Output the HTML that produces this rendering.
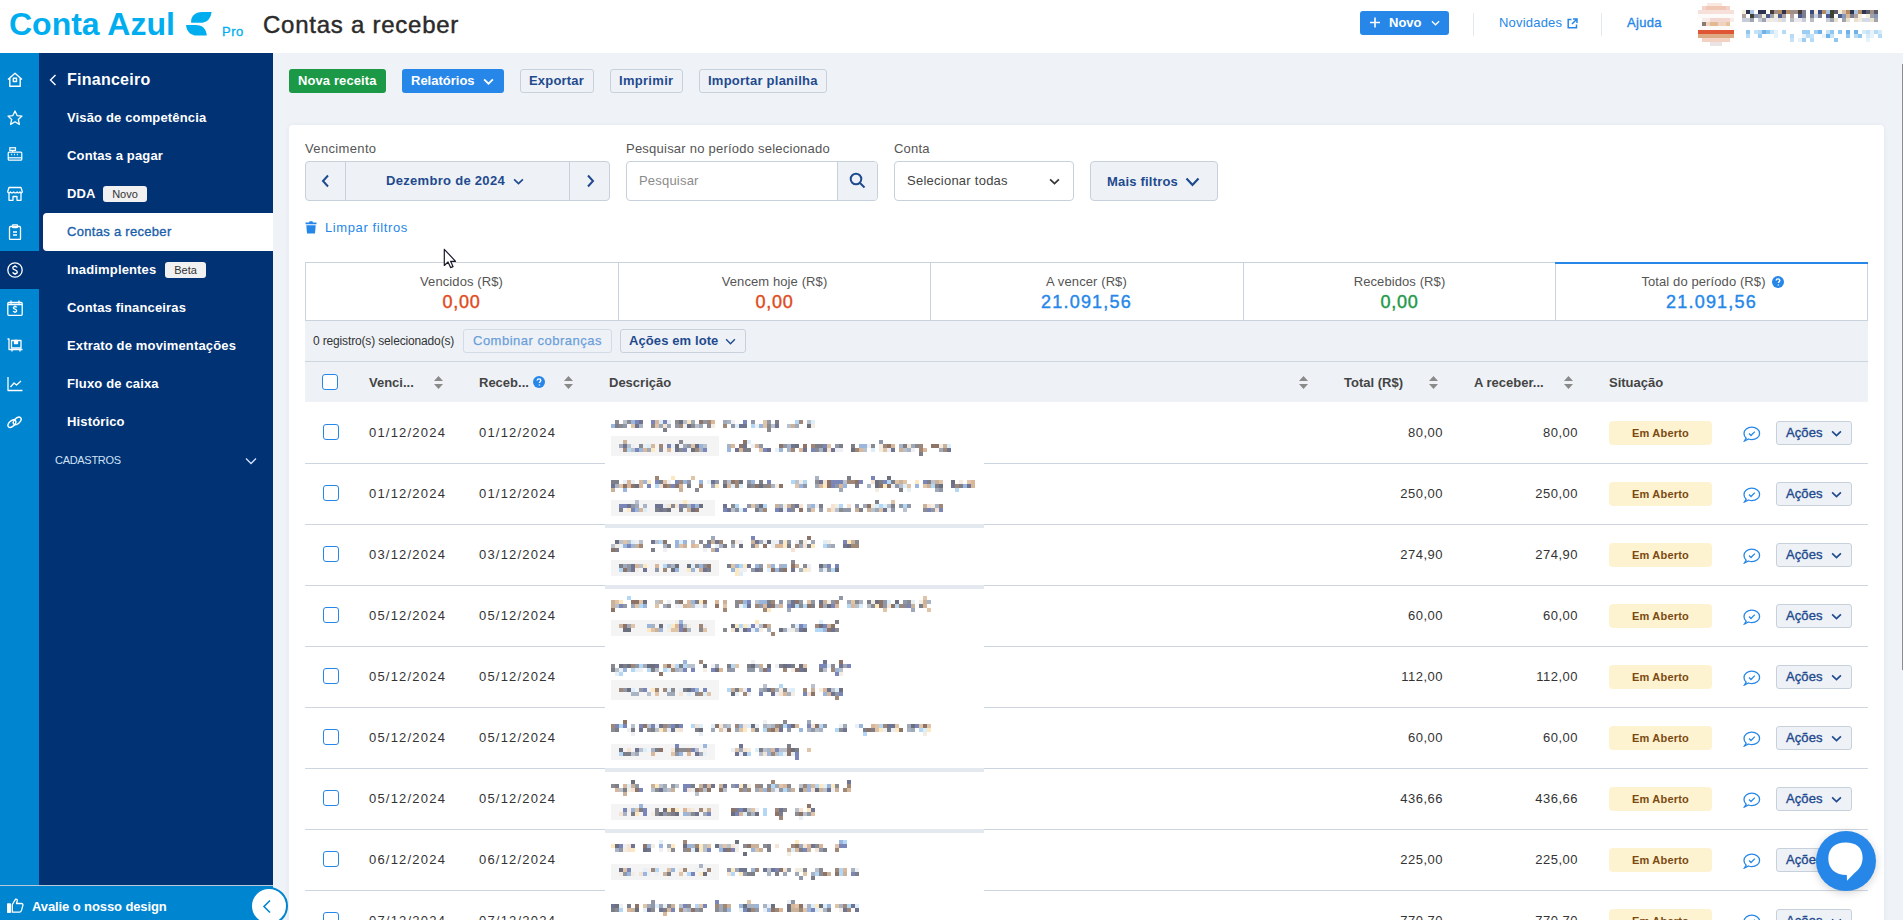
<!DOCTYPE html>
<html><head><meta charset="utf-8">
<style>
*{box-sizing:border-box;margin:0;padding:0}
html,body{width:1903px;height:920px;overflow:hidden;background:#eff3f8;font-family:"Liberation Sans",sans-serif;color:#333}
.a{position:absolute;white-space:nowrap}
.t13{font-size:13px;line-height:13px}
.b{font-weight:bold}
svg{display:block}
#hdr{position:absolute;left:0;top:0;width:1903px;height:53px;background:#fff}
#rail{position:absolute;left:0;top:53px;width:39px;height:867px;background:#0085d0}
#side{position:absolute;left:39px;top:53px;width:234px;height:867px;background:#003274}
.si{position:absolute;left:28px;font-size:13px;line-height:13px;font-weight:bold;color:#fff;letter-spacing:0.15px}
.ri{position:absolute;left:7px;width:16px;height:16px}
.btn{position:absolute;border-radius:3px;height:24px}
.wbtn{position:absolute;border:1px solid #c7d1dc;border-radius:3px;height:24px;background:#eef2f7}
</style></head>
<body>
<!-- HEADER -->
<div id="hdr">
  <div class="a b" style="left:9px;top:8px;font-size:32px;line-height:32px;color:#00aeef;letter-spacing:0px">Conta Azul</div>
  <svg class="a" style="left:186px;top:8px" width="27" height="30" viewBox="0 0 27 30"><path d="M5.1 14.8 C4.6 8 9 3.9 16.2 3.9 L25.6 3.9 C24.8 10.5 21 14.8 14.3 14.8 Z" fill="#00aeef"/><path d="M0 17 L9.9 17 C16.5 17 20.3 21 20.8 27.6 L11 27.6 C4.6 27.6 0.6 23.5 0 17 Z" fill="#00aeef"/></svg>
  <div class="a t13" style="left:222px;top:24.5px;color:#00aeef;letter-spacing:0.5px;-webkit-text-stroke:0.3px #00aeef">Pro</div>
  <div class="a" style="left:263px;top:12.5px;font-size:24px;line-height:24px;color:#2b2b2b;letter-spacing:0.75px;-webkit-text-stroke:0.45px #2b2b2b">Contas a receber</div>
</div>
<!-- RAIL -->
<div id="rail">
  <svg class="ri" style="top:19px" viewBox="0 0 16 16" fill="none" stroke="#fff" stroke-width="1.4" stroke-linejoin="round"><path d="M1 7.5 L8 1.2 L15 7.5 M2.8 6 V14.3 H13.2 V6"/><rect x="6.3" y="6.3" width="3.2" height="3.2"/></svg>
  <svg class="ri" style="top:57px" viewBox="0 0 16 16" fill="none" stroke="#fff" stroke-width="1.3" stroke-linejoin="round"><path d="M8 1 L10.1 5.6 L15 6.1 L11.3 9.4 L12.4 14.4 L8 11.8 L3.6 14.4 L4.7 9.4 L1 6.1 L5.9 5.6 Z"/></svg>
  <svg class="ri" style="top:94px" viewBox="0 0 16 17" fill="none" stroke="#fff" stroke-width="1.3"><rect x="2.5" y="0.8" width="6" height="2.8"/><path d="M5.5 3.6 V5.5"/><rect x="0.8" y="5.5" width="14.4" height="8.5" rx="1"/><path d="M0.8 11.5 H15.2"/><path d="M4 8 h1 M7 8 h1 M10 8 h1" stroke-width="1.6"/></svg>
  <svg class="ri" style="top:133px" viewBox="0 0 16 16" fill="none" stroke="#fff" stroke-width="1.3" stroke-linejoin="round"><path d="M2 1.5 H14 L15.3 5.8 C15.3 7.3 13.5 7.3 13 5.8 C12.3 7.3 10.5 7.3 10.2 5.8 C9.6 7.3 7.2 7.3 6.8 5.8 C6.1 7.3 4 7.3 3.4 5.8 C3 7.3 0.7 7.3 0.7 5.8 Z"/><path d="M2 7 V14.3 H6 V10.5 H10 V14.3 H14 V7"/></svg>
  <svg class="ri" style="top:171px" viewBox="0 0 16 16" fill="none" stroke="#fff" stroke-width="1.3" stroke-linejoin="round"><rect x="2.5" y="2.5" width="11" height="13" rx="1"/><rect x="5.5" y="0.8" width="5" height="2.8" rx="0.5"/><path d="M6 8 H10 M6 11 H10"/></svg>
  <div style="position:absolute;left:0;top:198px;width:39px;height:38px;background:#003274"></div>
  <svg class="ri" style="top:209px" viewBox="0 0 16 16" fill="none" stroke="#fff" stroke-width="1.3"><circle cx="8" cy="8" r="7.2"/><path d="M10.2 5.6 C9.8 4.6 8.9 4.3 8 4.3 C6.8 4.3 5.8 5 5.8 6 C5.8 8.3 10.3 7.5 10.3 10 C10.3 11 9.3 11.7 8 11.7 C6.9 11.7 6 11.2 5.7 10.3 M8 3 V4.3 M8 11.7 V13"/></svg>
  <svg class="ri" style="top:247px" viewBox="0 0 16 16" fill="none" stroke="#fff" stroke-width="1.3"><rect x="0.8" y="2.5" width="14.4" height="12.8" rx="1"/><path d="M4 0.5 V3.5 M12 0.5 V3.5 M0.8 4.5 H15.2"/><path d="M9.8 7.4 C9.5 6.8 8.8 6.6 8 6.6 C7.1 6.6 6.4 7.1 6.4 7.8 C6.4 9.5 9.7 8.9 9.7 10.7 C9.7 11.4 9 11.9 8 11.9 C7.2 11.9 6.5 11.6 6.2 10.9 M8 5.6 V6.6 M8 11.9 V13"/></svg>
  <svg class="ri" style="top:285px" viewBox="0 0 16 16" fill="none" stroke="#fff" stroke-width="1.3" stroke-linejoin="round"><path d="M0.5 1 H2 V11.5 H15.5"/><rect x="4.5" y="2.5" width="9.5" height="7.5"/><rect x="7.5" y="2.5" width="3" height="3" fill="#fff"/><path d="M5 11.5 V13.5 M13 11.5 V13.5"/></svg>
  <svg class="ri" style="top:323px" viewBox="0 0 16 16" fill="none" stroke="#fff" stroke-width="1.3" stroke-linejoin="round"><path d="M1 1 V14.5 H15.5"/><path d="M3.5 11 L7 7 L9.5 9 L14 5"/></svg>
  <svg class="ri" style="top:361px" viewBox="0 0 16 16" fill="none" stroke="#fff" stroke-width="1.4"><ellipse cx="4.9" cy="9.6" rx="4.6" ry="2.7" transform="rotate(-42 4.9 9.6)"/><ellipse cx="10.2" cy="6.9" rx="4.6" ry="2.7" transform="rotate(-42 10.2 6.9)"/></svg>
</div>
<!-- SIDEBAR -->
<div id="side">
  <svg class="a" style="left:10px;top:21px" width="8" height="12" viewBox="0 0 8 12" fill="none" stroke="#fff" stroke-width="1.4"><path d="M6.5 1 L1.5 6 L6.5 11"/></svg>
  <div class="a b" style="left:28px;top:19px;font-size:16px;line-height:16px;color:#fff;letter-spacing:0.25px">Financeiro</div>
  <div class="si" style="top:58px">Visão de competência</div>
  <div class="si" style="top:96px">Contas a pagar</div>
  <div class="si" style="top:134px">DDA</div>
  <div class="a" style="left:64px;top:133px;width:44px;height:16px;background:#f1f1f1;border-radius:3px;font-size:11px;line-height:16px;color:#333;text-align:center">Novo</div>
  <div class="a" style="left:4px;top:160px;width:230px;height:38px;background:#fff;border-radius:4px 0 0 4px"></div>
  <div class="si" style="top:172px;color:#1b5faa;font-weight:normal;letter-spacing:0.3px;-webkit-text-stroke:0.35px #1b5faa">Contas a receber</div>
  <div class="si" style="top:210px">Inadimplentes</div>
  <div class="a" style="left:126px;top:209px;width:41px;height:16px;background:#f1f1f1;border-radius:3px;font-size:11px;line-height:16px;color:#333;text-align:center">Beta</div>
  <div class="si" style="top:248px">Contas financeiras</div>
  <div class="si" style="top:286px">Extrato de movimentações</div>
  <div class="si" style="top:324px">Fluxo de caixa</div>
  <div class="si" style="top:362px">Histórico</div>
  <div class="a" style="left:16px;top:402px;font-size:11px;line-height:11px;color:#cfe3f7;letter-spacing:-0.3px">CADASTROS</div>
  <svg class="a" style="left:206px;top:404px" width="12" height="8" viewBox="0 0 12 8" fill="none" stroke="#cfe3f7" stroke-width="1.4"><path d="M1 1.5 L6 6.5 L11 1.5"/></svg>
</div>
<div class="a" style="left:0;top:885px;width:273px;height:35px;background:#0085d0;border-top:1px solid #b9c9d8"></div>
<svg class="a" style="left:7px;top:898px" width="17" height="15" viewBox="0 0 17 15" fill="none" stroke="#fff" stroke-width="1.3" stroke-linejoin="round"><rect x="0.7" y="6" width="2.6" height="8.3" fill="#fff"/><path d="M5.3 6.5 L8.6 1.2 C9.8 0.9 10.6 1.8 10.2 3 L9.5 5.5 H14.5 C15.6 5.5 16.2 6.4 15.9 7.4 L14.4 12.6 C14.1 13.6 13.5 14.2 12.5 14.2 H5.3 Z"/></svg>
<div class="a b" style="left:32px;top:900px;font-size:13px;line-height:13px;color:#fff;letter-spacing:-0.1px">Avalie o nosso design</div>
<div class="a" style="left:250px;top:887px;width:38px;height:38px;border-radius:50%;background:#fff;border:2px solid #0085d0"></div>
<svg class="a" style="left:262px;top:899px" width="10" height="15" viewBox="0 0 10 15" fill="none" stroke="#0085d0" stroke-width="1.6"><path d="M8 1.5 L2 7.5 L8 13.5"/></svg>

<!-- HEADER RIGHT -->
<div class="btn" style="left:1360px;top:11px;width:89px;background:#2687e9"></div>
<svg class="a" style="left:1370px;top:17px" width="10" height="11" viewBox="0 0 10 10" stroke="#fff" stroke-width="1.6"><path d="M5 0 V10 M0 5 H10"/></svg>
<div class="a b t13" style="left:1389px;top:15.5px;color:#fff">Novo</div>
<div class="a" style="left:1431px;top:20px"><svg width="9" height="6" viewBox="0 0 10 6" fill="none" stroke="#fff" stroke-width="1.4"><path d="M1 1 L5 5 L9 1"/></svg></div>
<div class="a" style="left:1473px;top:13px;width:1px;height:23px;background:#e3e9f0"></div>
<div class="a t13" style="left:1499px;top:15.5px;color:#2687e9;letter-spacing:0.2px">Novidades</div>
<svg class="a" style="left:1567px;top:18px" width="11" height="11" viewBox="0 0 11 11" fill="none" stroke="#2687e9" stroke-width="1.5"><path d="M4.5 1.5 H1.2 V9.8 H9.5 V6.5 M6 1 H10 V5 M10 1 L5 6"/></svg>
<div class="a" style="left:1601px;top:13px;width:1px;height:23px;background:#e3e9f0"></div>
<div class="a t13" style="left:1627px;top:16px;color:#2687e9;letter-spacing:0.3px;-webkit-text-stroke:0.35px #2687e9">Ajuda</div>
<!-- TOOLBAR -->
<div class="btn" style="left:289px;top:69px;width:97px;background:#1b9946"></div>
<div class="a b t13" style="left:298px;top:74px;color:#fff;letter-spacing:0.1px">Nova receita</div>
<div class="btn" style="left:402px;top:69px;width:102px;background:#2687e9"></div>
<div class="a b t13" style="left:411px;top:74px;color:#fff">Relatórios</div>
<div class="a" style="left:483px;top:78px"><svg width="11" height="7" viewBox="0 0 10 6" fill="none" stroke="#fff" stroke-width="1.6"><path d="M1 1 L5 5 L9 1"/></svg></div>
<div class="wbtn" style="left:520px;top:69px;width:74px"></div>
<div class="a t13" style="left:529px;top:74px;color:#1f4a8e;letter-spacing:0.2px;font-weight:bold">Exportar</div>
<div class="wbtn" style="left:610px;top:69px;width:73px"></div>
<div class="a t13" style="left:619px;top:74px;color:#1f4a8e;letter-spacing:0.3px;font-weight:bold">Imprimir</div>
<div class="wbtn" style="left:699px;top:69px;width:128px"></div>
<div class="a t13" style="left:708px;top:74px;color:#1f4a8e;letter-spacing:0.25px;font-weight:bold">Importar planilha</div>
<!-- CARD -->
<div class="a" style="left:289px;top:125px;width:1595px;height:800px;background:#fff;border-radius:4px;box-shadow:0 0 5px rgba(30,50,80,0.06)"></div>
<div class="a t13" style="left:305px;top:142px;color:#555;letter-spacing:0.35px">Vencimento</div>
<div class="a" style="left:305px;top:161px;width:305px;height:40px;background:#eef2f7;border:1px solid #c7d1dc;border-radius:4px"></div>
<div class="a" style="left:345px;top:162px;width:1px;height:38px;background:#c7d1dc"></div>
<div class="a" style="left:569px;top:162px;width:1px;height:38px;background:#c7d1dc"></div>
<svg class="a" style="left:321px;top:174px" width="9" height="14" viewBox="0 0 9 14" fill="none" stroke="#1f4a8e" stroke-width="2"><path d="M7 1.5 L2 7 L7 12.5"/></svg>
<svg class="a" style="left:586px;top:174px" width="9" height="14" viewBox="0 0 9 14" fill="none" stroke="#1f4a8e" stroke-width="2"><path d="M2 1.5 L7 7 L2 12.5"/></svg>
<div class="a b t13" style="left:386px;top:174px;color:#1f4a8e;letter-spacing:0.3px">Dezembro de 2024</div>
<div class="a" style="left:513px;top:178px"><svg width="11" height="7" viewBox="0 0 10 6" fill="none" stroke="#1f4a8e" stroke-width="1.5"><path d="M1 1 L5 5 L9 1"/></svg></div>
<div class="a t13" style="left:626px;top:142px;color:#555;letter-spacing:0.23px">Pesquisar no período selecionado</div>
<div class="a" style="left:626px;top:161px;width:252px;height:40px;background:#fff;border:1px solid #c7d1dc;border-radius:4px"></div>
<div class="a" style="left:837px;top:162px;width:40px;height:38px;background:#eef2f7;border-left:1px solid #c7d1dc;border-radius:0 3px 3px 0"></div>
<div class="a t13" style="left:639px;top:174px;color:#8b8b8b;letter-spacing:0.2px">Pesquisar</div>
<svg class="a" style="left:849px;top:172px" width="17" height="17" viewBox="0 0 17 17" fill="none" stroke="#1f4a8e" stroke-width="2"><circle cx="7" cy="7" r="5.3"/><path d="M11 11 L15.5 15.5"/></svg>
<div class="a t13" style="left:894px;top:142px;color:#555;letter-spacing:0.2px">Conta</div>
<div class="a" style="left:894px;top:161px;width:180px;height:40px;background:#fff;border:1px solid #c7d1dc;border-radius:4px"></div>
<div class="a t13" style="left:907px;top:174px;color:#444;letter-spacing:0.25px">Selecionar todas</div>
<div class="a" style="left:1049px;top:178px"><svg width="11" height="7" viewBox="0 0 10 6" fill="none" stroke="#333" stroke-width="1.5"><path d="M1 1 L5 5 L9 1"/></svg></div>
<div class="a" style="left:1090px;top:161px;width:128px;height:40px;background:#eef2f7;border:1px solid #c7d1dc;border-radius:4px"></div>
<div class="a b t13" style="left:1107px;top:175px;color:#1f4a8e;letter-spacing:0.2px">Mais filtros</div>
<svg class="a" style="left:1185px;top:177px" width="15" height="10" viewBox="0 0 15 10" fill="none" stroke="#1f4a8e" stroke-width="2.2"><path d="M1.5 1.5 L7.5 8 L13.5 1.5"/></svg>
<svg class="a" style="left:305px;top:221px" width="12" height="13" viewBox="0 0 12 13"><path d="M0.5 1.5 H4 L4.6 0.3 H7.4 L8 1.5 H11.5 V3.3 H0.5 Z M1.3 4.2 H10.7 L10 12.5 H2 Z" fill="#2687e9"/></svg>
<div class="a t13" style="left:325px;top:221px;color:#2687e9;letter-spacing:0.6px">Limpar filtros</div>
<!-- SUMMARY -->
<div class="a" style="left:305px;top:262px;width:1563px;height:59px;border:1px solid #c9d3de;background:#fff"></div>
<div class="a t13" style="left:305px;top:275px;width:313px;text-align:center;color:#555;letter-spacing:0.1px">Vencidos (R$)</div>
<div class="a" style="left:305px;top:292.5px;width:313px;text-align:center;font-size:18px;line-height:18px;color:#e04a1b;letter-spacing:0.7px;-webkit-text-stroke:0.4px #e04a1b">0,00</div>
<div class="a" style="left:618px;top:263px;width:1px;height:57px;background:#c9d3de"></div>
<div class="a t13" style="left:618px;top:275px;width:313px;text-align:center;color:#555;letter-spacing:0.1px">Vencem hoje (R$)</div>
<div class="a" style="left:618px;top:292.5px;width:313px;text-align:center;font-size:18px;line-height:18px;color:#e04a1b;letter-spacing:0.7px;-webkit-text-stroke:0.4px #e04a1b">0,00</div>
<div class="a" style="left:930px;top:263px;width:1px;height:57px;background:#c9d3de"></div>
<div class="a t13" style="left:930px;top:275px;width:313px;text-align:center;color:#555;letter-spacing:0.1px">A vencer (R$)</div>
<div class="a" style="left:930px;top:292.5px;width:313px;text-align:center;font-size:18px;line-height:18px;color:#2687e9;letter-spacing:1.2px;-webkit-text-stroke:0.4px #2687e9">21.091,56</div>
<div class="a" style="left:1243px;top:263px;width:1px;height:57px;background:#c9d3de"></div>
<div class="a t13" style="left:1243px;top:275px;width:313px;text-align:center;color:#555;letter-spacing:0.1px">Recebidos (R$)</div>
<div class="a" style="left:1243px;top:292.5px;width:313px;text-align:center;font-size:18px;line-height:18px;color:#1b9946;letter-spacing:0.7px;-webkit-text-stroke:0.4px #1b9946">0,00</div>
<div class="a" style="left:1555px;top:263px;width:1px;height:57px;background:#c9d3de"></div>
<div class="a t13" style="left:1547px;top:275px;width:313px;text-align:center;color:#555;letter-spacing:0.1px">Total do período (R$)</div>
<div class="a" style="left:1555px;top:292.5px;width:313px;text-align:center;font-size:18px;line-height:18px;color:#2687e9;letter-spacing:1.2px;-webkit-text-stroke:0.4px #2687e9">21.091,56</div>
<div class="a" style="left:1555px;top:262px;width:313px;height:2px;background:#2687e9"></div>
<svg class="a" style="left:1772px;top:276px" width="12" height="12" viewBox="0 0 12 12"><circle cx="6" cy="6" r="6" fill="#2687e9"/><path d="M4.2 4.6 C4.2 3.5 5 2.9 6 2.9 C7.1 2.9 7.8 3.6 7.8 4.5 C7.8 5.6 6.4 5.8 6.4 7 M6.4 8.4 V9.4" fill="none" stroke="#fff" stroke-width="1.4"/></svg>
<!-- BATCH BAR -->
<div class="a" style="left:305px;top:321px;width:1563px;height:41px;background:#eef2f7;border-bottom:1px solid #cdd6e0"></div>
<div class="a" style="left:313px;top:335px;font-size:12px;line-height:12px;color:#333;letter-spacing:-0.15px">0 registro(s) selecionado(s)</div>
<div class="a" style="left:463px;top:329px;width:149px;height:24px;border:1px solid #d3dce6;border-radius:3px;background:#eef2f7"></div>
<div class="a t13" style="left:473px;top:334px;color:#6c9fd9;letter-spacing:0.5px;-webkit-text-stroke:0.25px #6c9fd9">Combinar cobranças</div>
<div class="a" style="left:620px;top:329px;width:126px;height:24px;border:1px solid #c7d1dc;border-radius:3px;background:#eef2f7"></div>
<div class="a t13" style="left:629px;top:334px;color:#1f4a8e;letter-spacing:0.1px;font-weight:bold">Ações em lote</div>
<div class="a" style="left:725px;top:338px"><svg width="11" height="7" viewBox="0 0 10 6" fill="none" stroke="#1f4a8e" stroke-width="1.3"><path d="M1 1 L5 5 L9 1"/></svg></div>
<!-- TABLE HEADER -->
<div class="a" style="left:305px;top:362px;width:1563px;height:40px;background:#eef2f7"></div>
<div class="a" style="left:322px;top:374px;width:16px;height:16px;border:1.5px solid #2687e9;border-radius:3px;background:#fff"></div>
<div class="a b t13" style="left:369px;top:376px;color:#444">Venci...</div>
<div class="a b t13" style="left:479px;top:376px;color:#444">Receb...</div>
<div class="a b t13" style="left:609px;top:376px;color:#444">Descrição</div>
<div class="a b t13" style="left:1344px;top:376px;color:#444">Total (R$)</div>
<div class="a b t13" style="left:1474px;top:376px;color:#444">A receber...</div>
<div class="a b t13" style="left:1609px;top:376px;color:#444">Situação</div>
<div class="a" style="left:433px;top:375px"><svg width="11" height="15" viewBox="0 0 11 15"><path d="M1 6 L5.5 1 L10 6 Z M1 9 L5.5 14 L10 9 Z" fill="#8a8a8a"/></svg></div>
<div class="a" style="left:563px;top:375px"><svg width="11" height="15" viewBox="0 0 11 15"><path d="M1 6 L5.5 1 L10 6 Z M1 9 L5.5 14 L10 9 Z" fill="#8a8a8a"/></svg></div>
<div class="a" style="left:1298px;top:375px"><svg width="11" height="15" viewBox="0 0 11 15"><path d="M1 6 L5.5 1 L10 6 Z M1 9 L5.5 14 L10 9 Z" fill="#8a8a8a"/></svg></div>
<div class="a" style="left:1428px;top:375px"><svg width="11" height="15" viewBox="0 0 11 15"><path d="M1 6 L5.5 1 L10 6 Z M1 9 L5.5 14 L10 9 Z" fill="#8a8a8a"/></svg></div>
<div class="a" style="left:1563px;top:375px"><svg width="11" height="15" viewBox="0 0 11 15"><path d="M1 6 L5.5 1 L10 6 Z M1 9 L5.5 14 L10 9 Z" fill="#8a8a8a"/></svg></div>
<svg class="a" style="left:533px;top:376px" width="12" height="12" viewBox="0 0 12 12"><circle cx="6" cy="6" r="6" fill="#2687e9"/><path d="M4.2 4.6 C4.2 3.5 5 2.9 6 2.9 C7.1 2.9 7.8 3.6 7.8 4.5 C7.8 5.6 6.4 5.8 6.4 7 M6.4 8.4 V9.4" fill="none" stroke="#fff" stroke-width="1.4"/></svg>
<!-- ROWS -->
<div class="a" style="left:305px;top:463px;width:1563px;height:1px;background:#cdd6e0"></div>
<div class="a" style="left:605px;top:463px;width:379px;height:1px;background:#fff"></div>
<div class="a" style="left:323px;top:424px;width:16px;height:16px;border:1.5px solid #2687e9;border-radius:3px;background:#fff"></div>
<div class="a t13" style="left:369px;top:426px;color:#333;letter-spacing:1.2px">01/12/2024</div>
<div class="a t13" style="left:479px;top:426px;color:#333;letter-spacing:1.2px">01/12/2024</div>
<div class="a t13" style="left:1300px;top:426px;width:143px;text-align:right;color:#333;letter-spacing:0.5px">80,00</div>
<div class="a t13" style="left:1435px;top:426px;width:143px;text-align:right;color:#333;letter-spacing:0.5px">80,00</div>
<div class="a" style="left:1609px;top:421px;width:103px;height:24px;background:#fef3d0;border-radius:4px"></div>
<div class="a b" style="left:1609px;top:428px;width:103px;text-align:center;font-size:11px;line-height:11px;color:#7a4a12;letter-spacing:0.2px">Em Aberto</div>
<svg class="a" style="left:1743px;top:426px" width="18" height="16" viewBox="0 0 18 16" fill="none" stroke="#2687e9" stroke-width="1.3"><path d="M3.2 12.2 C1.7 11 1 9.4 1 7.6 C1 4 4.4 1.2 8.8 1.2 C13.2 1.2 16.6 4 16.6 7.4 C16.6 10.9 13.2 13.6 8.8 13.6 C7.6 13.6 6.6 13.4 5.6 13 L1.5 15 Z"/><path d="M6 7.5 L8 9.5 L11.8 5.6"/></svg>
<div class="a" style="left:1776px;top:421px;width:76px;height:24px;background:#eef2f7;border:1px solid #c7d1dc;border-radius:3px"></div>
<div class="a t13" style="left:1786px;top:426px;color:#1f4a8e;letter-spacing:0.1px;-webkit-text-stroke:0.35px #1f4a8e">Ações</div>
<div class="a" style="left:1831px;top:430px"><svg width="11" height="7" viewBox="0 0 10 6" fill="none" stroke="#1f4a8e" stroke-width="1.5"><path d="M1 1 L5 5 L9 1"/></svg></div>
<div class="a" style="left:305px;top:524px;width:1563px;height:1px;background:#cdd6e0"></div>
<div class="a" style="left:605px;top:524px;width:379px;height:4px;background:#e4e9ef"></div>
<div class="a" style="left:323px;top:485px;width:16px;height:16px;border:1.5px solid #2687e9;border-radius:3px;background:#fff"></div>
<div class="a t13" style="left:369px;top:487px;color:#333;letter-spacing:1.2px">01/12/2024</div>
<div class="a t13" style="left:479px;top:487px;color:#333;letter-spacing:1.2px">01/12/2024</div>
<div class="a t13" style="left:1300px;top:487px;width:143px;text-align:right;color:#333;letter-spacing:0.5px">250,00</div>
<div class="a t13" style="left:1435px;top:487px;width:143px;text-align:right;color:#333;letter-spacing:0.5px">250,00</div>
<div class="a" style="left:1609px;top:482px;width:103px;height:24px;background:#fef3d0;border-radius:4px"></div>
<div class="a b" style="left:1609px;top:489px;width:103px;text-align:center;font-size:11px;line-height:11px;color:#7a4a12;letter-spacing:0.2px">Em Aberto</div>
<svg class="a" style="left:1743px;top:487px" width="18" height="16" viewBox="0 0 18 16" fill="none" stroke="#2687e9" stroke-width="1.3"><path d="M3.2 12.2 C1.7 11 1 9.4 1 7.6 C1 4 4.4 1.2 8.8 1.2 C13.2 1.2 16.6 4 16.6 7.4 C16.6 10.9 13.2 13.6 8.8 13.6 C7.6 13.6 6.6 13.4 5.6 13 L1.5 15 Z"/><path d="M6 7.5 L8 9.5 L11.8 5.6"/></svg>
<div class="a" style="left:1776px;top:482px;width:76px;height:24px;background:#eef2f7;border:1px solid #c7d1dc;border-radius:3px"></div>
<div class="a t13" style="left:1786px;top:487px;color:#1f4a8e;letter-spacing:0.1px;-webkit-text-stroke:0.35px #1f4a8e">Ações</div>
<div class="a" style="left:1831px;top:491px"><svg width="11" height="7" viewBox="0 0 10 6" fill="none" stroke="#1f4a8e" stroke-width="1.5"><path d="M1 1 L5 5 L9 1"/></svg></div>
<div class="a" style="left:305px;top:585px;width:1563px;height:1px;background:#cdd6e0"></div>
<div class="a" style="left:605px;top:585px;width:379px;height:4px;background:#e4e9ef"></div>
<div class="a" style="left:323px;top:546px;width:16px;height:16px;border:1.5px solid #2687e9;border-radius:3px;background:#fff"></div>
<div class="a t13" style="left:369px;top:548px;color:#333;letter-spacing:1.2px">03/12/2024</div>
<div class="a t13" style="left:479px;top:548px;color:#333;letter-spacing:1.2px">03/12/2024</div>
<div class="a t13" style="left:1300px;top:548px;width:143px;text-align:right;color:#333;letter-spacing:0.5px">274,90</div>
<div class="a t13" style="left:1435px;top:548px;width:143px;text-align:right;color:#333;letter-spacing:0.5px">274,90</div>
<div class="a" style="left:1609px;top:543px;width:103px;height:24px;background:#fef3d0;border-radius:4px"></div>
<div class="a b" style="left:1609px;top:550px;width:103px;text-align:center;font-size:11px;line-height:11px;color:#7a4a12;letter-spacing:0.2px">Em Aberto</div>
<svg class="a" style="left:1743px;top:548px" width="18" height="16" viewBox="0 0 18 16" fill="none" stroke="#2687e9" stroke-width="1.3"><path d="M3.2 12.2 C1.7 11 1 9.4 1 7.6 C1 4 4.4 1.2 8.8 1.2 C13.2 1.2 16.6 4 16.6 7.4 C16.6 10.9 13.2 13.6 8.8 13.6 C7.6 13.6 6.6 13.4 5.6 13 L1.5 15 Z"/><path d="M6 7.5 L8 9.5 L11.8 5.6"/></svg>
<div class="a" style="left:1776px;top:543px;width:76px;height:24px;background:#eef2f7;border:1px solid #c7d1dc;border-radius:3px"></div>
<div class="a t13" style="left:1786px;top:548px;color:#1f4a8e;letter-spacing:0.1px;-webkit-text-stroke:0.35px #1f4a8e">Ações</div>
<div class="a" style="left:1831px;top:552px"><svg width="11" height="7" viewBox="0 0 10 6" fill="none" stroke="#1f4a8e" stroke-width="1.5"><path d="M1 1 L5 5 L9 1"/></svg></div>
<div class="a" style="left:305px;top:646px;width:1563px;height:1px;background:#cdd6e0"></div>
<div class="a" style="left:605px;top:646px;width:379px;height:1px;background:#fff"></div>
<div class="a" style="left:323px;top:607px;width:16px;height:16px;border:1.5px solid #2687e9;border-radius:3px;background:#fff"></div>
<div class="a t13" style="left:369px;top:609px;color:#333;letter-spacing:1.2px">05/12/2024</div>
<div class="a t13" style="left:479px;top:609px;color:#333;letter-spacing:1.2px">05/12/2024</div>
<div class="a t13" style="left:1300px;top:609px;width:143px;text-align:right;color:#333;letter-spacing:0.5px">60,00</div>
<div class="a t13" style="left:1435px;top:609px;width:143px;text-align:right;color:#333;letter-spacing:0.5px">60,00</div>
<div class="a" style="left:1609px;top:604px;width:103px;height:24px;background:#fef3d0;border-radius:4px"></div>
<div class="a b" style="left:1609px;top:611px;width:103px;text-align:center;font-size:11px;line-height:11px;color:#7a4a12;letter-spacing:0.2px">Em Aberto</div>
<svg class="a" style="left:1743px;top:609px" width="18" height="16" viewBox="0 0 18 16" fill="none" stroke="#2687e9" stroke-width="1.3"><path d="M3.2 12.2 C1.7 11 1 9.4 1 7.6 C1 4 4.4 1.2 8.8 1.2 C13.2 1.2 16.6 4 16.6 7.4 C16.6 10.9 13.2 13.6 8.8 13.6 C7.6 13.6 6.6 13.4 5.6 13 L1.5 15 Z"/><path d="M6 7.5 L8 9.5 L11.8 5.6"/></svg>
<div class="a" style="left:1776px;top:604px;width:76px;height:24px;background:#eef2f7;border:1px solid #c7d1dc;border-radius:3px"></div>
<div class="a t13" style="left:1786px;top:609px;color:#1f4a8e;letter-spacing:0.1px;-webkit-text-stroke:0.35px #1f4a8e">Ações</div>
<div class="a" style="left:1831px;top:613px"><svg width="11" height="7" viewBox="0 0 10 6" fill="none" stroke="#1f4a8e" stroke-width="1.5"><path d="M1 1 L5 5 L9 1"/></svg></div>
<div class="a" style="left:305px;top:707px;width:1563px;height:1px;background:#cdd6e0"></div>
<div class="a" style="left:605px;top:707px;width:379px;height:1px;background:#fff"></div>
<div class="a" style="left:323px;top:668px;width:16px;height:16px;border:1.5px solid #2687e9;border-radius:3px;background:#fff"></div>
<div class="a t13" style="left:369px;top:670px;color:#333;letter-spacing:1.2px">05/12/2024</div>
<div class="a t13" style="left:479px;top:670px;color:#333;letter-spacing:1.2px">05/12/2024</div>
<div class="a t13" style="left:1300px;top:670px;width:143px;text-align:right;color:#333;letter-spacing:0.5px">112,00</div>
<div class="a t13" style="left:1435px;top:670px;width:143px;text-align:right;color:#333;letter-spacing:0.5px">112,00</div>
<div class="a" style="left:1609px;top:665px;width:103px;height:24px;background:#fef3d0;border-radius:4px"></div>
<div class="a b" style="left:1609px;top:672px;width:103px;text-align:center;font-size:11px;line-height:11px;color:#7a4a12;letter-spacing:0.2px">Em Aberto</div>
<svg class="a" style="left:1743px;top:670px" width="18" height="16" viewBox="0 0 18 16" fill="none" stroke="#2687e9" stroke-width="1.3"><path d="M3.2 12.2 C1.7 11 1 9.4 1 7.6 C1 4 4.4 1.2 8.8 1.2 C13.2 1.2 16.6 4 16.6 7.4 C16.6 10.9 13.2 13.6 8.8 13.6 C7.6 13.6 6.6 13.4 5.6 13 L1.5 15 Z"/><path d="M6 7.5 L8 9.5 L11.8 5.6"/></svg>
<div class="a" style="left:1776px;top:665px;width:76px;height:24px;background:#eef2f7;border:1px solid #c7d1dc;border-radius:3px"></div>
<div class="a t13" style="left:1786px;top:670px;color:#1f4a8e;letter-spacing:0.1px;-webkit-text-stroke:0.35px #1f4a8e">Ações</div>
<div class="a" style="left:1831px;top:674px"><svg width="11" height="7" viewBox="0 0 10 6" fill="none" stroke="#1f4a8e" stroke-width="1.5"><path d="M1 1 L5 5 L9 1"/></svg></div>
<div class="a" style="left:305px;top:768px;width:1563px;height:1px;background:#cdd6e0"></div>
<div class="a" style="left:605px;top:768px;width:379px;height:4px;background:#e4e9ef"></div>
<div class="a" style="left:323px;top:729px;width:16px;height:16px;border:1.5px solid #2687e9;border-radius:3px;background:#fff"></div>
<div class="a t13" style="left:369px;top:731px;color:#333;letter-spacing:1.2px">05/12/2024</div>
<div class="a t13" style="left:479px;top:731px;color:#333;letter-spacing:1.2px">05/12/2024</div>
<div class="a t13" style="left:1300px;top:731px;width:143px;text-align:right;color:#333;letter-spacing:0.5px">60,00</div>
<div class="a t13" style="left:1435px;top:731px;width:143px;text-align:right;color:#333;letter-spacing:0.5px">60,00</div>
<div class="a" style="left:1609px;top:726px;width:103px;height:24px;background:#fef3d0;border-radius:4px"></div>
<div class="a b" style="left:1609px;top:733px;width:103px;text-align:center;font-size:11px;line-height:11px;color:#7a4a12;letter-spacing:0.2px">Em Aberto</div>
<svg class="a" style="left:1743px;top:731px" width="18" height="16" viewBox="0 0 18 16" fill="none" stroke="#2687e9" stroke-width="1.3"><path d="M3.2 12.2 C1.7 11 1 9.4 1 7.6 C1 4 4.4 1.2 8.8 1.2 C13.2 1.2 16.6 4 16.6 7.4 C16.6 10.9 13.2 13.6 8.8 13.6 C7.6 13.6 6.6 13.4 5.6 13 L1.5 15 Z"/><path d="M6 7.5 L8 9.5 L11.8 5.6"/></svg>
<div class="a" style="left:1776px;top:726px;width:76px;height:24px;background:#eef2f7;border:1px solid #c7d1dc;border-radius:3px"></div>
<div class="a t13" style="left:1786px;top:731px;color:#1f4a8e;letter-spacing:0.1px;-webkit-text-stroke:0.35px #1f4a8e">Ações</div>
<div class="a" style="left:1831px;top:735px"><svg width="11" height="7" viewBox="0 0 10 6" fill="none" stroke="#1f4a8e" stroke-width="1.5"><path d="M1 1 L5 5 L9 1"/></svg></div>
<div class="a" style="left:305px;top:829px;width:1563px;height:1px;background:#cdd6e0"></div>
<div class="a" style="left:605px;top:829px;width:379px;height:4px;background:#e4e9ef"></div>
<div class="a" style="left:323px;top:790px;width:16px;height:16px;border:1.5px solid #2687e9;border-radius:3px;background:#fff"></div>
<div class="a t13" style="left:369px;top:792px;color:#333;letter-spacing:1.2px">05/12/2024</div>
<div class="a t13" style="left:479px;top:792px;color:#333;letter-spacing:1.2px">05/12/2024</div>
<div class="a t13" style="left:1300px;top:792px;width:143px;text-align:right;color:#333;letter-spacing:0.5px">436,66</div>
<div class="a t13" style="left:1435px;top:792px;width:143px;text-align:right;color:#333;letter-spacing:0.5px">436,66</div>
<div class="a" style="left:1609px;top:787px;width:103px;height:24px;background:#fef3d0;border-radius:4px"></div>
<div class="a b" style="left:1609px;top:794px;width:103px;text-align:center;font-size:11px;line-height:11px;color:#7a4a12;letter-spacing:0.2px">Em Aberto</div>
<svg class="a" style="left:1743px;top:792px" width="18" height="16" viewBox="0 0 18 16" fill="none" stroke="#2687e9" stroke-width="1.3"><path d="M3.2 12.2 C1.7 11 1 9.4 1 7.6 C1 4 4.4 1.2 8.8 1.2 C13.2 1.2 16.6 4 16.6 7.4 C16.6 10.9 13.2 13.6 8.8 13.6 C7.6 13.6 6.6 13.4 5.6 13 L1.5 15 Z"/><path d="M6 7.5 L8 9.5 L11.8 5.6"/></svg>
<div class="a" style="left:1776px;top:787px;width:76px;height:24px;background:#eef2f7;border:1px solid #c7d1dc;border-radius:3px"></div>
<div class="a t13" style="left:1786px;top:792px;color:#1f4a8e;letter-spacing:0.1px;-webkit-text-stroke:0.35px #1f4a8e">Ações</div>
<div class="a" style="left:1831px;top:796px"><svg width="11" height="7" viewBox="0 0 10 6" fill="none" stroke="#1f4a8e" stroke-width="1.5"><path d="M1 1 L5 5 L9 1"/></svg></div>
<div class="a" style="left:305px;top:890px;width:1563px;height:1px;background:#cdd6e0"></div>
<div class="a" style="left:605px;top:890px;width:379px;height:1px;background:#fff"></div>
<div class="a" style="left:323px;top:851px;width:16px;height:16px;border:1.5px solid #2687e9;border-radius:3px;background:#fff"></div>
<div class="a t13" style="left:369px;top:853px;color:#333;letter-spacing:1.2px">06/12/2024</div>
<div class="a t13" style="left:479px;top:853px;color:#333;letter-spacing:1.2px">06/12/2024</div>
<div class="a t13" style="left:1300px;top:853px;width:143px;text-align:right;color:#333;letter-spacing:0.5px">225,00</div>
<div class="a t13" style="left:1435px;top:853px;width:143px;text-align:right;color:#333;letter-spacing:0.5px">225,00</div>
<div class="a" style="left:1609px;top:848px;width:103px;height:24px;background:#fef3d0;border-radius:4px"></div>
<div class="a b" style="left:1609px;top:855px;width:103px;text-align:center;font-size:11px;line-height:11px;color:#7a4a12;letter-spacing:0.2px">Em Aberto</div>
<svg class="a" style="left:1743px;top:853px" width="18" height="16" viewBox="0 0 18 16" fill="none" stroke="#2687e9" stroke-width="1.3"><path d="M3.2 12.2 C1.7 11 1 9.4 1 7.6 C1 4 4.4 1.2 8.8 1.2 C13.2 1.2 16.6 4 16.6 7.4 C16.6 10.9 13.2 13.6 8.8 13.6 C7.6 13.6 6.6 13.4 5.6 13 L1.5 15 Z"/><path d="M6 7.5 L8 9.5 L11.8 5.6"/></svg>
<div class="a" style="left:1776px;top:848px;width:76px;height:24px;background:#eef2f7;border:1px solid #c7d1dc;border-radius:3px"></div>
<div class="a t13" style="left:1786px;top:853px;color:#1f4a8e;letter-spacing:0.1px;-webkit-text-stroke:0.35px #1f4a8e">Ações</div>
<div class="a" style="left:1831px;top:857px"><svg width="11" height="7" viewBox="0 0 10 6" fill="none" stroke="#1f4a8e" stroke-width="1.5"><path d="M1 1 L5 5 L9 1"/></svg></div>
<div class="a" style="left:323px;top:912px;width:16px;height:16px;border:1.5px solid #2687e9;border-radius:3px;background:#fff"></div>
<div class="a t13" style="left:369px;top:914px;color:#333;letter-spacing:1.2px">07/12/2024</div>
<div class="a t13" style="left:479px;top:914px;color:#333;letter-spacing:1.2px">07/12/2024</div>
<div class="a t13" style="left:1300px;top:914px;width:143px;text-align:right;color:#333;letter-spacing:0.5px">770,70</div>
<div class="a t13" style="left:1435px;top:914px;width:143px;text-align:right;color:#333;letter-spacing:0.5px">770,70</div>
<div class="a" style="left:1609px;top:909px;width:103px;height:24px;background:#fef3d0;border-radius:4px"></div>
<div class="a b" style="left:1609px;top:916px;width:103px;text-align:center;font-size:11px;line-height:11px;color:#7a4a12;letter-spacing:0.2px">Em Aberto</div>
<svg class="a" style="left:1743px;top:914px" width="18" height="16" viewBox="0 0 18 16" fill="none" stroke="#2687e9" stroke-width="1.3"><path d="M3.2 12.2 C1.7 11 1 9.4 1 7.6 C1 4 4.4 1.2 8.8 1.2 C13.2 1.2 16.6 4 16.6 7.4 C16.6 10.9 13.2 13.6 8.8 13.6 C7.6 13.6 6.6 13.4 5.6 13 L1.5 15 Z"/><path d="M6 7.5 L8 9.5 L11.8 5.6"/></svg>
<div class="a" style="left:1776px;top:909px;width:76px;height:24px;background:#eef2f7;border:1px solid #c7d1dc;border-radius:3px"></div>
<div class="a t13" style="left:1786px;top:914px;color:#1f4a8e;letter-spacing:0.1px;-webkit-text-stroke:0.35px #1f4a8e">Ações</div>
<div class="a" style="left:1831px;top:918px"><svg width="11" height="7" viewBox="0 0 10 6" fill="none" stroke="#1f4a8e" stroke-width="1.5"><path d="M1 1 L5 5 L9 1"/></svg></div>
<svg class="a" style="left:0;top:0" width="1903" height="920" viewBox="0 0 1903 920"><rect x="611" y="424" width="4" height="4" fill="#9ab6dc"/><rect x="615" y="420" width="4" height="4" fill="#8a8b90"/><rect x="615" y="424" width="4" height="4" fill="#7d7f88"/><rect x="619" y="424" width="4" height="4" fill="#8a8b90"/><rect x="623" y="420" width="4" height="4" fill="#b9c2cc"/><rect x="623" y="424" width="4" height="4" fill="#9097a6"/><rect x="627" y="420" width="4" height="4" fill="#8a8b90"/><rect x="631" y="420" width="4" height="4" fill="#9ab6dc"/><rect x="631" y="424" width="4" height="4" fill="#e0c4a8"/><rect x="635" y="420" width="4" height="4" fill="#7b86b8"/><rect x="635" y="424" width="4" height="4" fill="#6f7590"/><rect x="639" y="420" width="4" height="4" fill="#6f7590"/><rect x="639" y="424" width="4" height="4" fill="#a8b4c4"/><rect x="651" y="420" width="4" height="4" fill="#7b86b8"/><rect x="651" y="424" width="4" height="4" fill="#8a8b90"/><rect x="655" y="420" width="4" height="4" fill="#d9b79a"/><rect x="655" y="424" width="4" height="4" fill="#e0c4a8"/><rect x="659" y="420" width="4" height="4" fill="#dceefa"/><rect x="659" y="424" width="4" height="4" fill="#9fa9b8"/><rect x="663" y="420" width="4" height="4" fill="#7b86b8"/><rect x="663" y="424" width="4" height="4" fill="#f5e3d3"/><rect x="667" y="420" width="4" height="4" fill="#e8f0f5"/><rect x="667" y="424" width="4" height="4" fill="#9fa9b8"/><rect x="675" y="420" width="4" height="4" fill="#8a8b90"/><rect x="675" y="424" width="4" height="4" fill="#9097a6"/><rect x="679" y="420" width="4" height="4" fill="#6b6f7e"/><rect x="679" y="424" width="4" height="4" fill="#a08878"/><rect x="683" y="420" width="4" height="4" fill="#b9c2cc"/><rect x="683" y="424" width="4" height="4" fill="#eef0f3"/><rect x="687" y="420" width="4" height="4" fill="#fde9c0"/><rect x="687" y="424" width="4" height="4" fill="#6b6f7e"/><rect x="691" y="420" width="4" height="4" fill="#9fa9b8"/><rect x="691" y="424" width="4" height="4" fill="#8a8b90"/><rect x="695" y="424" width="4" height="4" fill="#b9c2cc"/><rect x="699" y="420" width="4" height="4" fill="#8c7468"/><rect x="699" y="424" width="4" height="4" fill="#9fa9b8"/><rect x="703" y="420" width="4" height="4" fill="#9097a6"/><rect x="707" y="420" width="4" height="4" fill="#a08878"/><rect x="707" y="424" width="4" height="4" fill="#8a8b90"/><rect x="711" y="420" width="4" height="4" fill="#d9b79a"/><rect x="711" y="424" width="4" height="4" fill="#f3ede2"/><rect x="723" y="420" width="4" height="4" fill="#9fa9b8"/><rect x="723" y="424" width="4" height="4" fill="#a08878"/><rect x="727" y="420" width="4" height="4" fill="#a8b4c4"/><rect x="731" y="420" width="4" height="4" fill="#eef0f3"/><rect x="731" y="424" width="4" height="4" fill="#9097a6"/><rect x="735" y="424" width="4" height="4" fill="#dceefa"/><rect x="739" y="424" width="4" height="4" fill="#6f7590"/><rect x="743" y="420" width="4" height="4" fill="#7b86b8"/><rect x="743" y="424" width="4" height="4" fill="#6f7590"/><rect x="751" y="420" width="4" height="4" fill="#9097a6"/><rect x="751" y="424" width="4" height="4" fill="#b3d8f5"/><rect x="755" y="424" width="4" height="4" fill="#eef0f3"/><rect x="759" y="424" width="4" height="4" fill="#9ab6dc"/><rect x="763" y="420" width="4" height="4" fill="#e0c4a8"/><rect x="763" y="424" width="4" height="4" fill="#e0c4a8"/><rect x="767" y="420" width="4" height="4" fill="#9097a6"/><rect x="767" y="424" width="4" height="4" fill="#8a8b90"/><rect x="771" y="424" width="4" height="4" fill="#b9c2cc"/><rect x="775" y="420" width="4" height="4" fill="#7d7f88"/><rect x="775" y="424" width="4" height="4" fill="#6f7590"/><rect x="787" y="424" width="4" height="4" fill="#b9c2cc"/><rect x="791" y="424" width="4" height="4" fill="#c9b19a"/><rect x="795" y="420" width="4" height="4" fill="#b3d8f5"/><rect x="795" y="424" width="4" height="4" fill="#9fa9b8"/><rect x="799" y="420" width="4" height="4" fill="#a08878"/><rect x="807" y="420" width="4" height="4" fill="#b9c2cc"/><rect x="807" y="424" width="4" height="4" fill="#6b6f7e"/><rect x="811" y="420" width="4" height="4" fill="#dceefa"/><rect x="811" y="424" width="4" height="4" fill="#f3ede2"/><rect x="663" y="428" width="4" height="4" fill="#7d7f88"/><rect x="767" y="428" width="4" height="4" fill="#8a8b90"/><rect x="611" y="436" width="108" height="20" fill="#f4f4f4"/><rect x="619" y="444" width="4" height="4" fill="#9fa9b8"/><rect x="619" y="448" width="4" height="4" fill="#eef0f3"/><rect x="623" y="444" width="4" height="4" fill="#6f7590"/><rect x="623" y="448" width="4" height="4" fill="#a08878"/><rect x="627" y="444" width="4" height="4" fill="#b9c2cc"/><rect x="627" y="448" width="4" height="4" fill="#b3d8f5"/><rect x="631" y="444" width="4" height="4" fill="#eef0f3"/><rect x="631" y="448" width="4" height="4" fill="#b9c2cc"/><rect x="635" y="448" width="4" height="4" fill="#7b86b8"/><rect x="639" y="444" width="4" height="4" fill="#8a8b90"/><rect x="639" y="448" width="4" height="4" fill="#9ab6dc"/><rect x="643" y="444" width="4" height="4" fill="#e8f0f5"/><rect x="643" y="448" width="4" height="4" fill="#d9b79a"/><rect x="647" y="444" width="4" height="4" fill="#dceefa"/><rect x="647" y="448" width="4" height="4" fill="#9fa9b8"/><rect x="651" y="444" width="4" height="4" fill="#d9b79a"/><rect x="651" y="448" width="4" height="4" fill="#fde9c0"/><rect x="659" y="444" width="4" height="4" fill="#a08878"/><rect x="659" y="448" width="4" height="4" fill="#8a8b90"/><rect x="667" y="444" width="4" height="4" fill="#7b86b8"/><rect x="667" y="448" width="4" height="4" fill="#d9b79a"/><rect x="671" y="444" width="4" height="4" fill="#e8f0f5"/><rect x="675" y="444" width="4" height="4" fill="#6b6f7e"/><rect x="675" y="448" width="4" height="4" fill="#6f7590"/><rect x="679" y="448" width="4" height="4" fill="#8a8b90"/><rect x="683" y="444" width="4" height="4" fill="#9fa9b8"/><rect x="683" y="448" width="4" height="4" fill="#7b86b8"/><rect x="687" y="444" width="4" height="4" fill="#9097a6"/><rect x="691" y="444" width="4" height="4" fill="#e0c4a8"/><rect x="691" y="448" width="4" height="4" fill="#6b6f7e"/><rect x="695" y="444" width="4" height="4" fill="#6b6f7e"/><rect x="695" y="448" width="4" height="4" fill="#a08878"/><rect x="699" y="444" width="4" height="4" fill="#9ab6dc"/><rect x="699" y="448" width="4" height="4" fill="#a8b4c4"/><rect x="703" y="444" width="4" height="4" fill="#b9c2cc"/><rect x="703" y="448" width="4" height="4" fill="#7b86b8"/><rect x="623" y="440" width="4" height="4" fill="#c9b19a"/><rect x="679" y="440" width="4" height="4" fill="#8a8b90"/><rect x="727" y="444" width="4" height="4" fill="#a8b4c4"/><rect x="727" y="448" width="4" height="4" fill="#9ab6dc"/><rect x="731" y="444" width="4" height="4" fill="#d9b79a"/><rect x="735" y="448" width="4" height="4" fill="#6f7590"/><rect x="739" y="444" width="4" height="4" fill="#8c7468"/><rect x="739" y="448" width="4" height="4" fill="#d9b79a"/><rect x="743" y="444" width="4" height="4" fill="#6f7590"/><rect x="743" y="448" width="4" height="4" fill="#7d7f88"/><rect x="747" y="448" width="4" height="4" fill="#7d7f88"/><rect x="751" y="444" width="4" height="4" fill="#eef0f3"/><rect x="755" y="444" width="4" height="4" fill="#d9b79a"/><rect x="759" y="444" width="4" height="4" fill="#9097a6"/><rect x="759" y="448" width="4" height="4" fill="#e0c4a8"/><rect x="763" y="448" width="4" height="4" fill="#7b86b8"/><rect x="767" y="448" width="4" height="4" fill="#6f7590"/><rect x="775" y="448" width="4" height="4" fill="#e8f0f5"/><rect x="779" y="444" width="4" height="4" fill="#8c7468"/><rect x="779" y="448" width="4" height="4" fill="#9ab6dc"/><rect x="783" y="444" width="4" height="4" fill="#9097a6"/><rect x="787" y="444" width="4" height="4" fill="#a8b4c4"/><rect x="787" y="448" width="4" height="4" fill="#a8b4c4"/><rect x="791" y="444" width="4" height="4" fill="#6f7590"/><rect x="791" y="448" width="4" height="4" fill="#a08878"/><rect x="795" y="444" width="4" height="4" fill="#6b6f7e"/><rect x="799" y="448" width="4" height="4" fill="#d9b79a"/><rect x="803" y="444" width="4" height="4" fill="#8c7468"/><rect x="803" y="448" width="4" height="4" fill="#6f7590"/><rect x="811" y="444" width="4" height="4" fill="#a08878"/><rect x="811" y="448" width="4" height="4" fill="#7b86b8"/><rect x="815" y="444" width="4" height="4" fill="#7d7f88"/><rect x="815" y="448" width="4" height="4" fill="#8a8b90"/><rect x="819" y="444" width="4" height="4" fill="#7d7f88"/><rect x="819" y="448" width="4" height="4" fill="#a8b4c4"/><rect x="823" y="444" width="4" height="4" fill="#7b86b8"/><rect x="823" y="448" width="4" height="4" fill="#6f7590"/><rect x="827" y="444" width="4" height="4" fill="#e0c4a8"/><rect x="827" y="448" width="4" height="4" fill="#f5e3d3"/><rect x="831" y="448" width="4" height="4" fill="#6f7590"/><rect x="835" y="444" width="4" height="4" fill="#9097a6"/><rect x="835" y="448" width="4" height="4" fill="#eef0f3"/><rect x="839" y="444" width="4" height="4" fill="#7d7f88"/><rect x="839" y="448" width="4" height="4" fill="#eef0f3"/><rect x="851" y="444" width="4" height="4" fill="#7d7f88"/><rect x="851" y="448" width="4" height="4" fill="#6b6f7e"/><rect x="855" y="448" width="4" height="4" fill="#a08878"/><rect x="859" y="444" width="4" height="4" fill="#9ab6dc"/><rect x="859" y="448" width="4" height="4" fill="#d9b79a"/><rect x="863" y="444" width="4" height="4" fill="#9ab6dc"/><rect x="863" y="448" width="4" height="4" fill="#b9c2cc"/><rect x="867" y="444" width="4" height="4" fill="#eef0f3"/><rect x="871" y="444" width="4" height="4" fill="#8a8b90"/><rect x="871" y="448" width="4" height="4" fill="#dceefa"/><rect x="879" y="444" width="4" height="4" fill="#f3ede2"/><rect x="879" y="448" width="4" height="4" fill="#f3ede2"/><rect x="883" y="444" width="4" height="4" fill="#a08878"/><rect x="883" y="448" width="4" height="4" fill="#e0c4a8"/><rect x="887" y="444" width="4" height="4" fill="#8c7468"/><rect x="887" y="448" width="4" height="4" fill="#eef0f3"/><rect x="891" y="444" width="4" height="4" fill="#d9b79a"/><rect x="891" y="448" width="4" height="4" fill="#6f7590"/><rect x="899" y="444" width="4" height="4" fill="#a8b4c4"/><rect x="899" y="448" width="4" height="4" fill="#c9b19a"/><rect x="903" y="444" width="4" height="4" fill="#7d7f88"/><rect x="903" y="448" width="4" height="4" fill="#b9c2cc"/><rect x="907" y="444" width="4" height="4" fill="#f5e3d3"/><rect x="907" y="448" width="4" height="4" fill="#a8b4c4"/><rect x="911" y="444" width="4" height="4" fill="#9fa9b8"/><rect x="911" y="448" width="4" height="4" fill="#eef0f3"/><rect x="915" y="444" width="4" height="4" fill="#8a8b90"/><rect x="919" y="444" width="4" height="4" fill="#a08878"/><rect x="919" y="448" width="4" height="4" fill="#a08878"/><rect x="923" y="448" width="4" height="4" fill="#d9b79a"/><rect x="931" y="444" width="4" height="4" fill="#8c7468"/><rect x="935" y="444" width="4" height="4" fill="#8c7468"/><rect x="939" y="444" width="4" height="4" fill="#f3ede2"/><rect x="939" y="448" width="4" height="4" fill="#9fa9b8"/><rect x="943" y="444" width="4" height="4" fill="#c9b19a"/><rect x="943" y="448" width="4" height="4" fill="#a08878"/><rect x="947" y="444" width="4" height="4" fill="#dceefa"/><rect x="947" y="448" width="4" height="4" fill="#6f7590"/><rect x="743" y="440" width="4" height="4" fill="#8c7468"/><rect x="747" y="440" width="4" height="4" fill="#dceefa"/><rect x="879" y="440" width="4" height="4" fill="#9097a6"/><rect x="919" y="452" width="4" height="4" fill="#7d7f88"/><rect x="611" y="480" width="4" height="4" fill="#7d7f88"/><rect x="611" y="484" width="4" height="4" fill="#6f7590"/><rect x="615" y="480" width="4" height="4" fill="#7d7f88"/><rect x="615" y="484" width="4" height="4" fill="#a8b4c4"/><rect x="619" y="484" width="4" height="4" fill="#e0c4a8"/><rect x="623" y="480" width="4" height="4" fill="#e8f0f5"/><rect x="623" y="484" width="4" height="4" fill="#8c7468"/><rect x="627" y="480" width="4" height="4" fill="#d9b79a"/><rect x="627" y="484" width="4" height="4" fill="#d9b79a"/><rect x="631" y="480" width="4" height="4" fill="#e8f0f5"/><rect x="631" y="484" width="4" height="4" fill="#8c7468"/><rect x="635" y="484" width="4" height="4" fill="#6b6f7e"/><rect x="639" y="480" width="4" height="4" fill="#d9b79a"/><rect x="639" y="484" width="4" height="4" fill="#d9b79a"/><rect x="643" y="480" width="4" height="4" fill="#9ab6dc"/><rect x="647" y="480" width="4" height="4" fill="#fde9c0"/><rect x="647" y="484" width="4" height="4" fill="#7b86b8"/><rect x="655" y="480" width="4" height="4" fill="#7b86b8"/><rect x="655" y="484" width="4" height="4" fill="#b3d8f5"/><rect x="659" y="480" width="4" height="4" fill="#7d7f88"/><rect x="659" y="484" width="4" height="4" fill="#f5e3d3"/><rect x="663" y="480" width="4" height="4" fill="#e0c4a8"/><rect x="663" y="484" width="4" height="4" fill="#8c7468"/><rect x="667" y="480" width="4" height="4" fill="#eef0f3"/><rect x="667" y="484" width="4" height="4" fill="#a08878"/><rect x="671" y="484" width="4" height="4" fill="#7b86b8"/><rect x="675" y="480" width="4" height="4" fill="#7b86b8"/><rect x="675" y="484" width="4" height="4" fill="#8c7468"/><rect x="679" y="480" width="4" height="4" fill="#a08878"/><rect x="679" y="484" width="4" height="4" fill="#d9b79a"/><rect x="683" y="480" width="4" height="4" fill="#9ab6dc"/><rect x="687" y="480" width="4" height="4" fill="#9097a6"/><rect x="687" y="484" width="4" height="4" fill="#7d7f88"/><rect x="699" y="480" width="4" height="4" fill="#9ab6dc"/><rect x="699" y="484" width="4" height="4" fill="#a08878"/><rect x="707" y="480" width="4" height="4" fill="#e8f0f5"/><rect x="711" y="480" width="4" height="4" fill="#6f7590"/><rect x="711" y="484" width="4" height="4" fill="#9fa9b8"/><rect x="715" y="480" width="4" height="4" fill="#9097a6"/><rect x="715" y="484" width="4" height="4" fill="#fde9c0"/><rect x="723" y="480" width="4" height="4" fill="#8a8b90"/><rect x="723" y="484" width="4" height="4" fill="#6b6f7e"/><rect x="727" y="480" width="4" height="4" fill="#b9c2cc"/><rect x="727" y="484" width="4" height="4" fill="#d9b79a"/><rect x="731" y="480" width="4" height="4" fill="#8c7468"/><rect x="731" y="484" width="4" height="4" fill="#dceefa"/><rect x="735" y="480" width="4" height="4" fill="#a08878"/><rect x="735" y="484" width="4" height="4" fill="#a08878"/><rect x="739" y="480" width="4" height="4" fill="#6b6f7e"/><rect x="739" y="484" width="4" height="4" fill="#dceefa"/><rect x="747" y="480" width="4" height="4" fill="#9097a6"/><rect x="747" y="484" width="4" height="4" fill="#7d7f88"/><rect x="751" y="480" width="4" height="4" fill="#9ab6dc"/><rect x="751" y="484" width="4" height="4" fill="#8a8b90"/><rect x="755" y="484" width="4" height="4" fill="#8c7468"/><rect x="759" y="480" width="4" height="4" fill="#7d7f88"/><rect x="759" y="484" width="4" height="4" fill="#6b6f7e"/><rect x="763" y="484" width="4" height="4" fill="#8a8b90"/><rect x="767" y="480" width="4" height="4" fill="#7b86b8"/><rect x="767" y="484" width="4" height="4" fill="#a08878"/><rect x="771" y="484" width="4" height="4" fill="#a8b4c4"/><rect x="775" y="484" width="4" height="4" fill="#f3ede2"/><rect x="779" y="484" width="4" height="4" fill="#8c7468"/><rect x="791" y="480" width="4" height="4" fill="#b3d8f5"/><rect x="795" y="480" width="4" height="4" fill="#b9c2cc"/><rect x="795" y="484" width="4" height="4" fill="#e0c4a8"/><rect x="799" y="480" width="4" height="4" fill="#f3ede2"/><rect x="799" y="484" width="4" height="4" fill="#9ab6dc"/><rect x="803" y="480" width="4" height="4" fill="#b3d8f5"/><rect x="803" y="484" width="4" height="4" fill="#9097a6"/><rect x="815" y="480" width="4" height="4" fill="#8a8b90"/><rect x="815" y="484" width="4" height="4" fill="#9fa9b8"/><rect x="819" y="480" width="4" height="4" fill="#6f7590"/><rect x="819" y="484" width="4" height="4" fill="#d9b79a"/><rect x="823" y="480" width="4" height="4" fill="#f5e3d3"/><rect x="823" y="484" width="4" height="4" fill="#fde9c0"/><rect x="827" y="480" width="4" height="4" fill="#8c7468"/><rect x="827" y="484" width="4" height="4" fill="#8c7468"/><rect x="831" y="480" width="4" height="4" fill="#7b86b8"/><rect x="831" y="484" width="4" height="4" fill="#7b86b8"/><rect x="835" y="480" width="4" height="4" fill="#7b86b8"/><rect x="835" y="484" width="4" height="4" fill="#9097a6"/><rect x="839" y="480" width="4" height="4" fill="#7b86b8"/><rect x="839" y="484" width="4" height="4" fill="#d9b79a"/><rect x="843" y="480" width="4" height="4" fill="#b9c2cc"/><rect x="843" y="484" width="4" height="4" fill="#9ab6dc"/><rect x="847" y="480" width="4" height="4" fill="#a08878"/><rect x="851" y="480" width="4" height="4" fill="#a08878"/><rect x="855" y="480" width="4" height="4" fill="#8c7468"/><rect x="855" y="484" width="4" height="4" fill="#7d7f88"/><rect x="859" y="480" width="4" height="4" fill="#7b86b8"/><rect x="867" y="484" width="4" height="4" fill="#a8b4c4"/><rect x="871" y="480" width="4" height="4" fill="#f5e3d3"/><rect x="875" y="480" width="4" height="4" fill="#6b6f7e"/><rect x="875" y="484" width="4" height="4" fill="#6b6f7e"/><rect x="879" y="480" width="4" height="4" fill="#7d7f88"/><rect x="879" y="484" width="4" height="4" fill="#8c7468"/><rect x="883" y="480" width="4" height="4" fill="#7b86b8"/><rect x="883" y="484" width="4" height="4" fill="#fde9c0"/><rect x="887" y="480" width="4" height="4" fill="#b3d8f5"/><rect x="887" y="484" width="4" height="4" fill="#8c7468"/><rect x="891" y="480" width="4" height="4" fill="#7d7f88"/><rect x="891" y="484" width="4" height="4" fill="#eef0f3"/><rect x="895" y="480" width="4" height="4" fill="#e0c4a8"/><rect x="895" y="484" width="4" height="4" fill="#9097a6"/><rect x="899" y="480" width="4" height="4" fill="#c9b19a"/><rect x="899" y="484" width="4" height="4" fill="#b9c2cc"/><rect x="903" y="480" width="4" height="4" fill="#e0c4a8"/><rect x="903" y="484" width="4" height="4" fill="#dceefa"/><rect x="907" y="484" width="4" height="4" fill="#e0c4a8"/><rect x="915" y="480" width="4" height="4" fill="#fde9c0"/><rect x="915" y="484" width="4" height="4" fill="#9ab6dc"/><rect x="923" y="480" width="4" height="4" fill="#7b86b8"/><rect x="923" y="484" width="4" height="4" fill="#e0c4a8"/><rect x="927" y="480" width="4" height="4" fill="#7d7f88"/><rect x="927" y="484" width="4" height="4" fill="#c9b19a"/><rect x="931" y="480" width="4" height="4" fill="#b9c2cc"/><rect x="931" y="484" width="4" height="4" fill="#b3d8f5"/><rect x="935" y="480" width="4" height="4" fill="#c9b19a"/><rect x="935" y="484" width="4" height="4" fill="#7d7f88"/><rect x="939" y="480" width="4" height="4" fill="#e0c4a8"/><rect x="939" y="484" width="4" height="4" fill="#6b6f7e"/><rect x="951" y="480" width="4" height="4" fill="#6b6f7e"/><rect x="951" y="484" width="4" height="4" fill="#6f7590"/><rect x="955" y="484" width="4" height="4" fill="#a08878"/><rect x="959" y="480" width="4" height="4" fill="#f3ede2"/><rect x="959" y="484" width="4" height="4" fill="#7d7f88"/><rect x="963" y="484" width="4" height="4" fill="#9ab6dc"/><rect x="967" y="480" width="4" height="4" fill="#e0c4a8"/><rect x="967" y="484" width="4" height="4" fill="#6f7590"/><rect x="971" y="480" width="4" height="4" fill="#d9b79a"/><rect x="971" y="484" width="4" height="4" fill="#d9b79a"/><rect x="611" y="488" width="4" height="4" fill="#c9b19a"/><rect x="623" y="488" width="4" height="4" fill="#9ab6dc"/><rect x="655" y="476" width="4" height="4" fill="#a08878"/><rect x="671" y="476" width="4" height="4" fill="#fde9c0"/><rect x="679" y="488" width="4" height="4" fill="#c9b19a"/><rect x="691" y="476" width="4" height="4" fill="#e0c4a8"/><rect x="695" y="488" width="4" height="4" fill="#8a8b90"/><rect x="815" y="476" width="4" height="4" fill="#a8b4c4"/><rect x="839" y="488" width="4" height="4" fill="#9fa9b8"/><rect x="847" y="476" width="4" height="4" fill="#7d7f88"/><rect x="871" y="476" width="4" height="4" fill="#7b86b8"/><rect x="875" y="488" width="4" height="4" fill="#f3ede2"/><rect x="887" y="476" width="4" height="4" fill="#6b6f7e"/><rect x="899" y="488" width="4" height="4" fill="#7d7f88"/><rect x="907" y="488" width="4" height="4" fill="#e8f0f5"/><rect x="935" y="488" width="4" height="4" fill="#9fa9b8"/><rect x="939" y="488" width="4" height="4" fill="#9097a6"/><rect x="955" y="488" width="4" height="4" fill="#b3d8f5"/><rect x="611" y="500" width="104" height="16" fill="#f4f4f4"/><rect x="619" y="504" width="4" height="4" fill="#7b86b8"/><rect x="619" y="508" width="4" height="4" fill="#7d7f88"/><rect x="623" y="504" width="4" height="4" fill="#7b86b8"/><rect x="627" y="504" width="4" height="4" fill="#6f7590"/><rect x="627" y="508" width="4" height="4" fill="#fde9c0"/><rect x="631" y="504" width="4" height="4" fill="#9097a6"/><rect x="631" y="508" width="4" height="4" fill="#7b86b8"/><rect x="635" y="504" width="4" height="4" fill="#9fa9b8"/><rect x="635" y="508" width="4" height="4" fill="#9ab6dc"/><rect x="639" y="508" width="4" height="4" fill="#d9b79a"/><rect x="643" y="504" width="4" height="4" fill="#a8b4c4"/><rect x="643" y="508" width="4" height="4" fill="#dceefa"/><rect x="655" y="504" width="4" height="4" fill="#6f7590"/><rect x="655" y="508" width="4" height="4" fill="#7d7f88"/><rect x="659" y="504" width="4" height="4" fill="#6f7590"/><rect x="659" y="508" width="4" height="4" fill="#6f7590"/><rect x="663" y="504" width="4" height="4" fill="#e8f0f5"/><rect x="663" y="508" width="4" height="4" fill="#7d7f88"/><rect x="667" y="504" width="4" height="4" fill="#f5e3d3"/><rect x="667" y="508" width="4" height="4" fill="#6b6f7e"/><rect x="671" y="504" width="4" height="4" fill="#8a8b90"/><rect x="675" y="504" width="4" height="4" fill="#f5e3d3"/><rect x="679" y="504" width="4" height="4" fill="#7b86b8"/><rect x="679" y="508" width="4" height="4" fill="#7d7f88"/><rect x="683" y="504" width="4" height="4" fill="#8a8b90"/><rect x="687" y="504" width="4" height="4" fill="#a8b4c4"/><rect x="687" y="508" width="4" height="4" fill="#c9b19a"/><rect x="691" y="504" width="4" height="4" fill="#7b86b8"/><rect x="691" y="508" width="4" height="4" fill="#6b6f7e"/><rect x="695" y="504" width="4" height="4" fill="#9ab6dc"/><rect x="695" y="508" width="4" height="4" fill="#8c7468"/><rect x="699" y="504" width="4" height="4" fill="#6b6f7e"/><rect x="635" y="500" width="4" height="4" fill="#b9c2cc"/><rect x="683" y="500" width="4" height="4" fill="#fde9c0"/><rect x="723" y="504" width="4" height="4" fill="#6f7590"/><rect x="723" y="508" width="4" height="4" fill="#7b86b8"/><rect x="727" y="508" width="4" height="4" fill="#6f7590"/><rect x="731" y="504" width="4" height="4" fill="#8a8b90"/><rect x="731" y="508" width="4" height="4" fill="#b9c2cc"/><rect x="735" y="504" width="4" height="4" fill="#b3d8f5"/><rect x="735" y="508" width="4" height="4" fill="#9097a6"/><rect x="739" y="508" width="4" height="4" fill="#dceefa"/><rect x="743" y="508" width="4" height="4" fill="#7b86b8"/><rect x="747" y="504" width="4" height="4" fill="#9097a6"/><rect x="751" y="504" width="4" height="4" fill="#e0c4a8"/><rect x="755" y="504" width="4" height="4" fill="#9fa9b8"/><rect x="755" y="508" width="4" height="4" fill="#7d7f88"/><rect x="759" y="504" width="4" height="4" fill="#6b6f7e"/><rect x="759" y="508" width="4" height="4" fill="#9fa9b8"/><rect x="763" y="504" width="4" height="4" fill="#b3d8f5"/><rect x="763" y="508" width="4" height="4" fill="#a08878"/><rect x="775" y="504" width="4" height="4" fill="#c9b19a"/><rect x="775" y="508" width="4" height="4" fill="#7b86b8"/><rect x="779" y="504" width="4" height="4" fill="#a8b4c4"/><rect x="779" y="508" width="4" height="4" fill="#6f7590"/><rect x="783" y="504" width="4" height="4" fill="#f3ede2"/><rect x="783" y="508" width="4" height="4" fill="#eef0f3"/><rect x="787" y="504" width="4" height="4" fill="#c9b19a"/><rect x="787" y="508" width="4" height="4" fill="#7b86b8"/><rect x="791" y="504" width="4" height="4" fill="#8a8b90"/><rect x="791" y="508" width="4" height="4" fill="#8a8b90"/><rect x="795" y="504" width="4" height="4" fill="#6f7590"/><rect x="799" y="504" width="4" height="4" fill="#f5e3d3"/><rect x="799" y="508" width="4" height="4" fill="#8c7468"/><rect x="807" y="504" width="4" height="4" fill="#b9c2cc"/><rect x="807" y="508" width="4" height="4" fill="#9097a6"/><rect x="811" y="504" width="4" height="4" fill="#9ab6dc"/><rect x="811" y="508" width="4" height="4" fill="#e0c4a8"/><rect x="815" y="504" width="4" height="4" fill="#eef0f3"/><rect x="819" y="504" width="4" height="4" fill="#7d7f88"/><rect x="819" y="508" width="4" height="4" fill="#9097a6"/><rect x="827" y="508" width="4" height="4" fill="#e0c4a8"/><rect x="831" y="504" width="4" height="4" fill="#f5e3d3"/><rect x="831" y="508" width="4" height="4" fill="#f5e3d3"/><rect x="835" y="504" width="4" height="4" fill="#f3ede2"/><rect x="835" y="508" width="4" height="4" fill="#b9c2cc"/><rect x="839" y="504" width="4" height="4" fill="#b3d8f5"/><rect x="839" y="508" width="4" height="4" fill="#8a8b90"/><rect x="843" y="508" width="4" height="4" fill="#9097a6"/><rect x="847" y="504" width="4" height="4" fill="#f5e3d3"/><rect x="847" y="508" width="4" height="4" fill="#9097a6"/><rect x="855" y="504" width="4" height="4" fill="#9097a6"/><rect x="855" y="508" width="4" height="4" fill="#c9b19a"/><rect x="859" y="508" width="4" height="4" fill="#7d7f88"/><rect x="863" y="504" width="4" height="4" fill="#9fa9b8"/><rect x="867" y="504" width="4" height="4" fill="#8c7468"/><rect x="867" y="508" width="4" height="4" fill="#c9b19a"/><rect x="871" y="504" width="4" height="4" fill="#f3ede2"/><rect x="871" y="508" width="4" height="4" fill="#b9c2cc"/><rect x="875" y="504" width="4" height="4" fill="#dceefa"/><rect x="875" y="508" width="4" height="4" fill="#9fa9b8"/><rect x="879" y="504" width="4" height="4" fill="#b3d8f5"/><rect x="879" y="508" width="4" height="4" fill="#e0c4a8"/><rect x="883" y="504" width="4" height="4" fill="#dceefa"/><rect x="883" y="508" width="4" height="4" fill="#6f7590"/><rect x="887" y="504" width="4" height="4" fill="#b9c2cc"/><rect x="887" y="508" width="4" height="4" fill="#eef0f3"/><rect x="891" y="504" width="4" height="4" fill="#7d7f88"/><rect x="891" y="508" width="4" height="4" fill="#9097a6"/><rect x="899" y="504" width="4" height="4" fill="#9097a6"/><rect x="903" y="504" width="4" height="4" fill="#b3d8f5"/><rect x="903" y="508" width="4" height="4" fill="#b9c2cc"/><rect x="907" y="504" width="4" height="4" fill="#9097a6"/><rect x="923" y="504" width="4" height="4" fill="#c9b19a"/><rect x="923" y="508" width="4" height="4" fill="#8a8b90"/><rect x="927" y="504" width="4" height="4" fill="#f5e3d3"/><rect x="927" y="508" width="4" height="4" fill="#7b86b8"/><rect x="931" y="504" width="4" height="4" fill="#f3ede2"/><rect x="931" y="508" width="4" height="4" fill="#9097a6"/><rect x="935" y="504" width="4" height="4" fill="#a8b4c4"/><rect x="935" y="508" width="4" height="4" fill="#f5e3d3"/><rect x="939" y="504" width="4" height="4" fill="#a08878"/><rect x="939" y="508" width="4" height="4" fill="#7b86b8"/><rect x="875" y="500" width="4" height="4" fill="#7d7f88"/><rect x="891" y="500" width="4" height="4" fill="#e0c4a8"/><rect x="611" y="544" width="4" height="4" fill="#b9c2cc"/><rect x="615" y="540" width="4" height="4" fill="#6b6f7e"/><rect x="615" y="544" width="4" height="4" fill="#f3ede2"/><rect x="619" y="540" width="4" height="4" fill="#b9c2cc"/><rect x="619" y="544" width="4" height="4" fill="#e8f0f5"/><rect x="623" y="540" width="4" height="4" fill="#e0c4a8"/><rect x="623" y="544" width="4" height="4" fill="#9ab6dc"/><rect x="627" y="540" width="4" height="4" fill="#b9c2cc"/><rect x="627" y="544" width="4" height="4" fill="#7b86b8"/><rect x="631" y="540" width="4" height="4" fill="#dceefa"/><rect x="631" y="544" width="4" height="4" fill="#9ab6dc"/><rect x="635" y="540" width="4" height="4" fill="#eef0f3"/><rect x="635" y="544" width="4" height="4" fill="#c9b19a"/><rect x="639" y="540" width="4" height="4" fill="#b9c2cc"/><rect x="639" y="544" width="4" height="4" fill="#a08878"/><rect x="651" y="540" width="4" height="4" fill="#6f7590"/><rect x="655" y="540" width="4" height="4" fill="#b9c2cc"/><rect x="659" y="540" width="4" height="4" fill="#b3d8f5"/><rect x="663" y="540" width="4" height="4" fill="#8c7468"/><rect x="663" y="544" width="4" height="4" fill="#a8b4c4"/><rect x="667" y="544" width="4" height="4" fill="#7d7f88"/><rect x="675" y="540" width="4" height="4" fill="#9ab6dc"/><rect x="675" y="544" width="4" height="4" fill="#9ab6dc"/><rect x="679" y="540" width="4" height="4" fill="#dceefa"/><rect x="679" y="544" width="4" height="4" fill="#e0c4a8"/><rect x="683" y="540" width="4" height="4" fill="#9ab6dc"/><rect x="683" y="544" width="4" height="4" fill="#c9b19a"/><rect x="691" y="540" width="4" height="4" fill="#b9c2cc"/><rect x="691" y="544" width="4" height="4" fill="#d9b79a"/><rect x="695" y="544" width="4" height="4" fill="#e0c4a8"/><rect x="699" y="540" width="4" height="4" fill="#8a8b90"/><rect x="703" y="544" width="4" height="4" fill="#8a8b90"/><rect x="707" y="540" width="4" height="4" fill="#7d7f88"/><rect x="707" y="544" width="4" height="4" fill="#7b86b8"/><rect x="711" y="540" width="4" height="4" fill="#c9b19a"/><rect x="715" y="540" width="4" height="4" fill="#6f7590"/><rect x="715" y="544" width="4" height="4" fill="#e8f0f5"/><rect x="719" y="540" width="4" height="4" fill="#a08878"/><rect x="719" y="544" width="4" height="4" fill="#a8b4c4"/><rect x="723" y="544" width="4" height="4" fill="#7d7f88"/><rect x="731" y="540" width="4" height="4" fill="#8a8b90"/><rect x="731" y="544" width="4" height="4" fill="#a8b4c4"/><rect x="735" y="540" width="4" height="4" fill="#f3ede2"/><rect x="739" y="540" width="4" height="4" fill="#eef0f3"/><rect x="739" y="544" width="4" height="4" fill="#6b6f7e"/><rect x="751" y="540" width="4" height="4" fill="#c9b19a"/><rect x="751" y="544" width="4" height="4" fill="#8a8b90"/><rect x="755" y="540" width="4" height="4" fill="#6f7590"/><rect x="755" y="544" width="4" height="4" fill="#e0c4a8"/><rect x="759" y="540" width="4" height="4" fill="#9fa9b8"/><rect x="763" y="540" width="4" height="4" fill="#eef0f3"/><rect x="763" y="544" width="4" height="4" fill="#8c7468"/><rect x="767" y="540" width="4" height="4" fill="#6b6f7e"/><rect x="771" y="540" width="4" height="4" fill="#e8f0f5"/><rect x="771" y="544" width="4" height="4" fill="#eef0f3"/><rect x="775" y="540" width="4" height="4" fill="#eef0f3"/><rect x="775" y="544" width="4" height="4" fill="#d9b79a"/><rect x="779" y="540" width="4" height="4" fill="#9097a6"/><rect x="779" y="544" width="4" height="4" fill="#d9b79a"/><rect x="783" y="540" width="4" height="4" fill="#fde9c0"/><rect x="783" y="544" width="4" height="4" fill="#fde9c0"/><rect x="787" y="540" width="4" height="4" fill="#9097a6"/><rect x="787" y="544" width="4" height="4" fill="#7d7f88"/><rect x="795" y="540" width="4" height="4" fill="#eef0f3"/><rect x="795" y="544" width="4" height="4" fill="#a08878"/><rect x="799" y="540" width="4" height="4" fill="#8a8b90"/><rect x="799" y="544" width="4" height="4" fill="#9fa9b8"/><rect x="803" y="540" width="4" height="4" fill="#f3ede2"/><rect x="803" y="544" width="4" height="4" fill="#f5e3d3"/><rect x="807" y="544" width="4" height="4" fill="#7d7f88"/><rect x="811" y="540" width="4" height="4" fill="#9fa9b8"/><rect x="811" y="544" width="4" height="4" fill="#fde9c0"/><rect x="823" y="540" width="4" height="4" fill="#dceefa"/><rect x="823" y="544" width="4" height="4" fill="#b3d8f5"/><rect x="827" y="540" width="4" height="4" fill="#f3ede2"/><rect x="827" y="544" width="4" height="4" fill="#a8b4c4"/><rect x="831" y="544" width="4" height="4" fill="#9fa9b8"/><rect x="843" y="540" width="4" height="4" fill="#7b86b8"/><rect x="843" y="544" width="4" height="4" fill="#6f7590"/><rect x="847" y="540" width="4" height="4" fill="#fde9c0"/><rect x="847" y="544" width="4" height="4" fill="#6b6f7e"/><rect x="851" y="540" width="4" height="4" fill="#c9b19a"/><rect x="851" y="544" width="4" height="4" fill="#a08878"/><rect x="855" y="540" width="4" height="4" fill="#8a8b90"/><rect x="855" y="544" width="4" height="4" fill="#a08878"/><rect x="611" y="548" width="4" height="4" fill="#8c7468"/><rect x="615" y="548" width="4" height="4" fill="#7d7f88"/><rect x="651" y="548" width="4" height="4" fill="#7d7f88"/><rect x="663" y="548" width="4" height="4" fill="#eef0f3"/><rect x="703" y="548" width="4" height="4" fill="#eef0f3"/><rect x="711" y="536" width="4" height="4" fill="#9fa9b8"/><rect x="711" y="548" width="4" height="4" fill="#c9b19a"/><rect x="715" y="548" width="4" height="4" fill="#7b86b8"/><rect x="751" y="536" width="4" height="4" fill="#7b86b8"/><rect x="791" y="548" width="4" height="4" fill="#f5e3d3"/><rect x="807" y="536" width="4" height="4" fill="#8c7468"/><rect x="611" y="560" width="108" height="16" fill="#f4f4f4"/><rect x="619" y="564" width="4" height="4" fill="#7d7f88"/><rect x="619" y="568" width="4" height="4" fill="#b3d8f5"/><rect x="623" y="564" width="4" height="4" fill="#9fa9b8"/><rect x="623" y="568" width="4" height="4" fill="#8c7468"/><rect x="627" y="564" width="4" height="4" fill="#9097a6"/><rect x="627" y="568" width="4" height="4" fill="#9097a6"/><rect x="631" y="564" width="4" height="4" fill="#6f7590"/><rect x="631" y="568" width="4" height="4" fill="#6f7590"/><rect x="635" y="564" width="4" height="4" fill="#d9b79a"/><rect x="635" y="568" width="4" height="4" fill="#f3ede2"/><rect x="639" y="564" width="4" height="4" fill="#b9c2cc"/><rect x="643" y="564" width="4" height="4" fill="#fde9c0"/><rect x="643" y="568" width="4" height="4" fill="#6f7590"/><rect x="655" y="564" width="4" height="4" fill="#d9b79a"/><rect x="655" y="568" width="4" height="4" fill="#9097a6"/><rect x="663" y="564" width="4" height="4" fill="#b3d8f5"/><rect x="663" y="568" width="4" height="4" fill="#a08878"/><rect x="667" y="564" width="4" height="4" fill="#9097a6"/><rect x="671" y="564" width="4" height="4" fill="#a8b4c4"/><rect x="671" y="568" width="4" height="4" fill="#6b6f7e"/><rect x="675" y="564" width="4" height="4" fill="#6b6f7e"/><rect x="675" y="568" width="4" height="4" fill="#9ab6dc"/><rect x="687" y="564" width="4" height="4" fill="#6b6f7e"/><rect x="687" y="568" width="4" height="4" fill="#fde9c0"/><rect x="691" y="564" width="4" height="4" fill="#dceefa"/><rect x="691" y="568" width="4" height="4" fill="#9ab6dc"/><rect x="695" y="564" width="4" height="4" fill="#8a8b90"/><rect x="699" y="564" width="4" height="4" fill="#9ab6dc"/><rect x="699" y="568" width="4" height="4" fill="#c9b19a"/><rect x="703" y="564" width="4" height="4" fill="#8a8b90"/><rect x="703" y="568" width="4" height="4" fill="#6f7590"/><rect x="707" y="564" width="4" height="4" fill="#8c7468"/><rect x="707" y="568" width="4" height="4" fill="#7d7f88"/><rect x="727" y="564" width="4" height="4" fill="#7d7f88"/><rect x="731" y="564" width="4" height="4" fill="#e0c4a8"/><rect x="731" y="568" width="4" height="4" fill="#9ab6dc"/><rect x="735" y="564" width="4" height="4" fill="#9ab6dc"/><rect x="735" y="568" width="4" height="4" fill="#fde9c0"/><rect x="739" y="564" width="4" height="4" fill="#b3d8f5"/><rect x="739" y="568" width="4" height="4" fill="#eef0f3"/><rect x="743" y="564" width="4" height="4" fill="#fde9c0"/><rect x="743" y="568" width="4" height="4" fill="#eef0f3"/><rect x="747" y="564" width="4" height="4" fill="#6f7590"/><rect x="751" y="568" width="4" height="4" fill="#9097a6"/><rect x="755" y="564" width="4" height="4" fill="#9ab6dc"/><rect x="755" y="568" width="4" height="4" fill="#6f7590"/><rect x="759" y="564" width="4" height="4" fill="#9097a6"/><rect x="759" y="568" width="4" height="4" fill="#7d7f88"/><rect x="767" y="564" width="4" height="4" fill="#e0c4a8"/><rect x="767" y="568" width="4" height="4" fill="#dceefa"/><rect x="771" y="564" width="4" height="4" fill="#9ab6dc"/><rect x="771" y="568" width="4" height="4" fill="#8c7468"/><rect x="775" y="568" width="4" height="4" fill="#9ab6dc"/><rect x="779" y="564" width="4" height="4" fill="#a8b4c4"/><rect x="779" y="568" width="4" height="4" fill="#7d7f88"/><rect x="783" y="564" width="4" height="4" fill="#9ab6dc"/><rect x="783" y="568" width="4" height="4" fill="#8c7468"/><rect x="791" y="564" width="4" height="4" fill="#8c7468"/><rect x="791" y="568" width="4" height="4" fill="#6f7590"/><rect x="795" y="564" width="4" height="4" fill="#c9b19a"/><rect x="799" y="568" width="4" height="4" fill="#a8b4c4"/><rect x="803" y="564" width="4" height="4" fill="#8a8b90"/><rect x="803" y="568" width="4" height="4" fill="#fde9c0"/><rect x="807" y="564" width="4" height="4" fill="#eef0f3"/><rect x="807" y="568" width="4" height="4" fill="#f3ede2"/><rect x="819" y="564" width="4" height="4" fill="#6b6f7e"/><rect x="819" y="568" width="4" height="4" fill="#a8b4c4"/><rect x="823" y="564" width="4" height="4" fill="#9fa9b8"/><rect x="823" y="568" width="4" height="4" fill="#e8f0f5"/><rect x="827" y="564" width="4" height="4" fill="#7b86b8"/><rect x="827" y="568" width="4" height="4" fill="#9097a6"/><rect x="831" y="568" width="4" height="4" fill="#b3d8f5"/><rect x="835" y="564" width="4" height="4" fill="#7b86b8"/><rect x="835" y="568" width="4" height="4" fill="#6b6f7e"/><rect x="735" y="572" width="4" height="4" fill="#fde9c0"/><rect x="739" y="572" width="4" height="4" fill="#dceefa"/><rect x="791" y="560" width="4" height="4" fill="#8a8b90"/><rect x="611" y="600" width="4" height="4" fill="#c9b19a"/><rect x="611" y="604" width="4" height="4" fill="#c9b19a"/><rect x="615" y="600" width="4" height="4" fill="#e0c4a8"/><rect x="615" y="604" width="4" height="4" fill="#b9c2cc"/><rect x="619" y="600" width="4" height="4" fill="#fde9c0"/><rect x="619" y="604" width="4" height="4" fill="#7b86b8"/><rect x="623" y="604" width="4" height="4" fill="#9097a6"/><rect x="631" y="600" width="4" height="4" fill="#8c7468"/><rect x="631" y="604" width="4" height="4" fill="#9fa9b8"/><rect x="635" y="600" width="4" height="4" fill="#8c7468"/><rect x="635" y="604" width="4" height="4" fill="#e0c4a8"/><rect x="639" y="600" width="4" height="4" fill="#e0c4a8"/><rect x="639" y="604" width="4" height="4" fill="#b3d8f5"/><rect x="643" y="600" width="4" height="4" fill="#6b6f7e"/><rect x="643" y="604" width="4" height="4" fill="#9ab6dc"/><rect x="655" y="600" width="4" height="4" fill="#b9c2cc"/><rect x="655" y="604" width="4" height="4" fill="#e0c4a8"/><rect x="659" y="600" width="4" height="4" fill="#c9b19a"/><rect x="663" y="604" width="4" height="4" fill="#9fa9b8"/><rect x="667" y="600" width="4" height="4" fill="#eef0f3"/><rect x="667" y="604" width="4" height="4" fill="#8a8b90"/><rect x="675" y="600" width="4" height="4" fill="#8a8b90"/><rect x="675" y="604" width="4" height="4" fill="#eef0f3"/><rect x="679" y="600" width="4" height="4" fill="#8c7468"/><rect x="679" y="604" width="4" height="4" fill="#eef0f3"/><rect x="683" y="604" width="4" height="4" fill="#c9b19a"/><rect x="687" y="600" width="4" height="4" fill="#d9b79a"/><rect x="687" y="604" width="4" height="4" fill="#d9b79a"/><rect x="691" y="600" width="4" height="4" fill="#9ab6dc"/><rect x="691" y="604" width="4" height="4" fill="#b9c2cc"/><rect x="695" y="600" width="4" height="4" fill="#7d7f88"/><rect x="695" y="604" width="4" height="4" fill="#e8f0f5"/><rect x="699" y="600" width="4" height="4" fill="#fde9c0"/><rect x="699" y="604" width="4" height="4" fill="#eef0f3"/><rect x="703" y="600" width="4" height="4" fill="#8c7468"/><rect x="703" y="604" width="4" height="4" fill="#b9c2cc"/><rect x="715" y="600" width="4" height="4" fill="#d9b79a"/><rect x="715" y="604" width="4" height="4" fill="#8c7468"/><rect x="723" y="600" width="4" height="4" fill="#c9b19a"/><rect x="723" y="604" width="4" height="4" fill="#e0c4a8"/><rect x="735" y="600" width="4" height="4" fill="#8a8b90"/><rect x="735" y="604" width="4" height="4" fill="#8a8b90"/><rect x="739" y="600" width="4" height="4" fill="#a08878"/><rect x="739" y="604" width="4" height="4" fill="#eef0f3"/><rect x="743" y="600" width="4" height="4" fill="#9ab6dc"/><rect x="743" y="604" width="4" height="4" fill="#b3d8f5"/><rect x="747" y="600" width="4" height="4" fill="#7b86b8"/><rect x="747" y="604" width="4" height="4" fill="#6f7590"/><rect x="755" y="600" width="4" height="4" fill="#b9c2cc"/><rect x="755" y="604" width="4" height="4" fill="#a08878"/><rect x="759" y="600" width="4" height="4" fill="#9ab6dc"/><rect x="759" y="604" width="4" height="4" fill="#9097a6"/><rect x="763" y="600" width="4" height="4" fill="#9ab6dc"/><rect x="763" y="604" width="4" height="4" fill="#d9b79a"/><rect x="767" y="600" width="4" height="4" fill="#7d7f88"/><rect x="767" y="604" width="4" height="4" fill="#6f7590"/><rect x="771" y="600" width="4" height="4" fill="#a08878"/><rect x="771" y="604" width="4" height="4" fill="#8c7468"/><rect x="775" y="604" width="4" height="4" fill="#b9c2cc"/><rect x="779" y="600" width="4" height="4" fill="#9097a6"/><rect x="779" y="604" width="4" height="4" fill="#d9b79a"/><rect x="787" y="600" width="4" height="4" fill="#9fa9b8"/><rect x="787" y="604" width="4" height="4" fill="#7b86b8"/><rect x="791" y="600" width="4" height="4" fill="#6f7590"/><rect x="791" y="604" width="4" height="4" fill="#6f7590"/><rect x="795" y="600" width="4" height="4" fill="#8c7468"/><rect x="795" y="604" width="4" height="4" fill="#b3d8f5"/><rect x="799" y="600" width="4" height="4" fill="#9097a6"/><rect x="799" y="604" width="4" height="4" fill="#8a8b90"/><rect x="803" y="604" width="4" height="4" fill="#b3d8f5"/><rect x="807" y="600" width="4" height="4" fill="#e0c4a8"/><rect x="807" y="604" width="4" height="4" fill="#8c7468"/><rect x="811" y="600" width="4" height="4" fill="#9097a6"/><rect x="811" y="604" width="4" height="4" fill="#7d7f88"/><rect x="819" y="600" width="4" height="4" fill="#6f7590"/><rect x="819" y="604" width="4" height="4" fill="#8c7468"/><rect x="823" y="600" width="4" height="4" fill="#c9b19a"/><rect x="823" y="604" width="4" height="4" fill="#9fa9b8"/><rect x="827" y="600" width="4" height="4" fill="#f3ede2"/><rect x="827" y="604" width="4" height="4" fill="#6b6f7e"/><rect x="831" y="600" width="4" height="4" fill="#9097a6"/><rect x="831" y="604" width="4" height="4" fill="#7b86b8"/><rect x="835" y="600" width="4" height="4" fill="#a08878"/><rect x="835" y="604" width="4" height="4" fill="#d9b79a"/><rect x="847" y="600" width="4" height="4" fill="#9fa9b8"/><rect x="847" y="604" width="4" height="4" fill="#b3d8f5"/><rect x="851" y="600" width="4" height="4" fill="#e0c4a8"/><rect x="851" y="604" width="4" height="4" fill="#d9b79a"/><rect x="855" y="600" width="4" height="4" fill="#8a8b90"/><rect x="855" y="604" width="4" height="4" fill="#b9c2cc"/><rect x="859" y="600" width="4" height="4" fill="#a8b4c4"/><rect x="859" y="604" width="4" height="4" fill="#dceefa"/><rect x="867" y="600" width="4" height="4" fill="#7d7f88"/><rect x="867" y="604" width="4" height="4" fill="#b9c2cc"/><rect x="871" y="600" width="4" height="4" fill="#f3ede2"/><rect x="871" y="604" width="4" height="4" fill="#8a8b90"/><rect x="875" y="600" width="4" height="4" fill="#6b6f7e"/><rect x="875" y="604" width="4" height="4" fill="#fde9c0"/><rect x="879" y="600" width="4" height="4" fill="#8c7468"/><rect x="879" y="604" width="4" height="4" fill="#8c7468"/><rect x="883" y="600" width="4" height="4" fill="#9097a6"/><rect x="883" y="604" width="4" height="4" fill="#9097a6"/><rect x="887" y="600" width="4" height="4" fill="#dceefa"/><rect x="887" y="604" width="4" height="4" fill="#f5e3d3"/><rect x="891" y="604" width="4" height="4" fill="#8c7468"/><rect x="895" y="600" width="4" height="4" fill="#6b6f7e"/><rect x="895" y="604" width="4" height="4" fill="#b3d8f5"/><rect x="899" y="604" width="4" height="4" fill="#a08878"/><rect x="903" y="600" width="4" height="4" fill="#9097a6"/><rect x="903" y="604" width="4" height="4" fill="#8a8b90"/><rect x="907" y="600" width="4" height="4" fill="#8a8b90"/><rect x="907" y="604" width="4" height="4" fill="#7b86b8"/><rect x="911" y="600" width="4" height="4" fill="#e8f0f5"/><rect x="911" y="604" width="4" height="4" fill="#c9b19a"/><rect x="919" y="600" width="4" height="4" fill="#f3ede2"/><rect x="919" y="604" width="4" height="4" fill="#7d7f88"/><rect x="923" y="600" width="4" height="4" fill="#c9b19a"/><rect x="923" y="604" width="4" height="4" fill="#d9b79a"/><rect x="927" y="600" width="4" height="4" fill="#a8b4c4"/><rect x="611" y="608" width="4" height="4" fill="#8c7468"/><rect x="627" y="596" width="4" height="4" fill="#b3d8f5"/><rect x="723" y="608" width="4" height="4" fill="#a08878"/><rect x="763" y="608" width="4" height="4" fill="#a08878"/><rect x="767" y="608" width="4" height="4" fill="#fde9c0"/><rect x="787" y="608" width="4" height="4" fill="#9fa9b8"/><rect x="839" y="596" width="4" height="4" fill="#9097a6"/><rect x="883" y="608" width="4" height="4" fill="#e0c4a8"/><rect x="911" y="608" width="4" height="4" fill="#9fa9b8"/><rect x="923" y="596" width="4" height="4" fill="#e0c4a8"/><rect x="927" y="608" width="4" height="4" fill="#e0c4a8"/><rect x="611" y="620" width="104" height="16" fill="#f4f4f4"/><rect x="619" y="624" width="4" height="4" fill="#c9b19a"/><rect x="623" y="624" width="4" height="4" fill="#8c7468"/><rect x="623" y="628" width="4" height="4" fill="#6b6f7e"/><rect x="627" y="624" width="4" height="4" fill="#9fa9b8"/><rect x="627" y="628" width="4" height="4" fill="#6b6f7e"/><rect x="631" y="624" width="4" height="4" fill="#e0c4a8"/><rect x="647" y="624" width="4" height="4" fill="#9ab6dc"/><rect x="647" y="628" width="4" height="4" fill="#fde9c0"/><rect x="651" y="624" width="4" height="4" fill="#a8b4c4"/><rect x="651" y="628" width="4" height="4" fill="#e0c4a8"/><rect x="655" y="628" width="4" height="4" fill="#c9b19a"/><rect x="659" y="624" width="4" height="4" fill="#6b6f7e"/><rect x="659" y="628" width="4" height="4" fill="#9ab6dc"/><rect x="667" y="624" width="4" height="4" fill="#dceefa"/><rect x="667" y="628" width="4" height="4" fill="#f3ede2"/><rect x="671" y="624" width="4" height="4" fill="#fde9c0"/><rect x="671" y="628" width="4" height="4" fill="#e0c4a8"/><rect x="675" y="624" width="4" height="4" fill="#d9b79a"/><rect x="675" y="628" width="4" height="4" fill="#e0c4a8"/><rect x="679" y="624" width="4" height="4" fill="#7b86b8"/><rect x="679" y="628" width="4" height="4" fill="#7b86b8"/><rect x="683" y="624" width="4" height="4" fill="#b9c2cc"/><rect x="683" y="628" width="4" height="4" fill="#8c7468"/><rect x="687" y="624" width="4" height="4" fill="#f3ede2"/><rect x="687" y="628" width="4" height="4" fill="#a8b4c4"/><rect x="699" y="624" width="4" height="4" fill="#a08878"/><rect x="699" y="628" width="4" height="4" fill="#8a8b90"/><rect x="703" y="624" width="4" height="4" fill="#eef0f3"/><rect x="703" y="628" width="4" height="4" fill="#e0c4a8"/><rect x="675" y="620" width="4" height="4" fill="#f3ede2"/><rect x="679" y="620" width="4" height="4" fill="#9ab6dc"/><rect x="723" y="628" width="4" height="4" fill="#8a8b90"/><rect x="731" y="624" width="4" height="4" fill="#6b6f7e"/><rect x="731" y="628" width="4" height="4" fill="#f5e3d3"/><rect x="735" y="624" width="4" height="4" fill="#fde9c0"/><rect x="735" y="628" width="4" height="4" fill="#6b6f7e"/><rect x="739" y="624" width="4" height="4" fill="#b3d8f5"/><rect x="739" y="628" width="4" height="4" fill="#e8f0f5"/><rect x="743" y="624" width="4" height="4" fill="#fde9c0"/><rect x="743" y="628" width="4" height="4" fill="#6b6f7e"/><rect x="747" y="624" width="4" height="4" fill="#e8f0f5"/><rect x="747" y="628" width="4" height="4" fill="#7b86b8"/><rect x="751" y="624" width="4" height="4" fill="#7b86b8"/><rect x="751" y="628" width="4" height="4" fill="#e8f0f5"/><rect x="755" y="624" width="4" height="4" fill="#eef0f3"/><rect x="755" y="628" width="4" height="4" fill="#9ab6dc"/><rect x="759" y="624" width="4" height="4" fill="#b9c2cc"/><rect x="759" y="628" width="4" height="4" fill="#f3ede2"/><rect x="763" y="624" width="4" height="4" fill="#8c7468"/><rect x="767" y="624" width="4" height="4" fill="#c9b19a"/><rect x="767" y="628" width="4" height="4" fill="#a8b4c4"/><rect x="779" y="628" width="4" height="4" fill="#6b6f7e"/><rect x="783" y="628" width="4" height="4" fill="#9fa9b8"/><rect x="787" y="628" width="4" height="4" fill="#e8f0f5"/><rect x="791" y="624" width="4" height="4" fill="#9097a6"/><rect x="791" y="628" width="4" height="4" fill="#f3ede2"/><rect x="795" y="624" width="4" height="4" fill="#dceefa"/><rect x="795" y="628" width="4" height="4" fill="#b9c2cc"/><rect x="799" y="624" width="4" height="4" fill="#7b86b8"/><rect x="799" y="628" width="4" height="4" fill="#6f7590"/><rect x="803" y="624" width="4" height="4" fill="#9ab6dc"/><rect x="803" y="628" width="4" height="4" fill="#6b6f7e"/><rect x="815" y="624" width="4" height="4" fill="#a08878"/><rect x="815" y="628" width="4" height="4" fill="#b3d8f5"/><rect x="819" y="624" width="4" height="4" fill="#6b6f7e"/><rect x="819" y="628" width="4" height="4" fill="#b3d8f5"/><rect x="823" y="624" width="4" height="4" fill="#7b86b8"/><rect x="823" y="628" width="4" height="4" fill="#9ab6dc"/><rect x="827" y="624" width="4" height="4" fill="#c9b19a"/><rect x="827" y="628" width="4" height="4" fill="#8c7468"/><rect x="831" y="624" width="4" height="4" fill="#8c7468"/><rect x="831" y="628" width="4" height="4" fill="#6f7590"/><rect x="835" y="628" width="4" height="4" fill="#8a8b90"/><rect x="755" y="620" width="4" height="4" fill="#fde9c0"/><rect x="771" y="632" width="4" height="4" fill="#a08878"/><rect x="819" y="620" width="4" height="4" fill="#dceefa"/><rect x="835" y="620" width="4" height="4" fill="#7d7f88"/><rect x="611" y="664" width="4" height="4" fill="#8a8b90"/><rect x="611" y="668" width="4" height="4" fill="#7d7f88"/><rect x="615" y="668" width="4" height="4" fill="#b9c2cc"/><rect x="619" y="664" width="4" height="4" fill="#6b6f7e"/><rect x="619" y="668" width="4" height="4" fill="#e8f0f5"/><rect x="623" y="664" width="4" height="4" fill="#7d7f88"/><rect x="623" y="668" width="4" height="4" fill="#9ab6dc"/><rect x="627" y="664" width="4" height="4" fill="#6b6f7e"/><rect x="631" y="664" width="4" height="4" fill="#a08878"/><rect x="631" y="668" width="4" height="4" fill="#b3d8f5"/><rect x="635" y="664" width="4" height="4" fill="#9097a6"/><rect x="635" y="668" width="4" height="4" fill="#e8f0f5"/><rect x="639" y="664" width="4" height="4" fill="#b3d8f5"/><rect x="639" y="668" width="4" height="4" fill="#eef0f3"/><rect x="643" y="664" width="4" height="4" fill="#9fa9b8"/><rect x="647" y="664" width="4" height="4" fill="#6b6f7e"/><rect x="647" y="668" width="4" height="4" fill="#b3d8f5"/><rect x="651" y="664" width="4" height="4" fill="#6b6f7e"/><rect x="651" y="668" width="4" height="4" fill="#7d7f88"/><rect x="655" y="664" width="4" height="4" fill="#6f7590"/><rect x="655" y="668" width="4" height="4" fill="#b9c2cc"/><rect x="663" y="664" width="4" height="4" fill="#c9b19a"/><rect x="663" y="668" width="4" height="4" fill="#b3d8f5"/><rect x="667" y="664" width="4" height="4" fill="#8c7468"/><rect x="667" y="668" width="4" height="4" fill="#dceefa"/><rect x="671" y="664" width="4" height="4" fill="#f5e3d3"/><rect x="671" y="668" width="4" height="4" fill="#a08878"/><rect x="675" y="664" width="4" height="4" fill="#b3d8f5"/><rect x="675" y="668" width="4" height="4" fill="#a8b4c4"/><rect x="679" y="664" width="4" height="4" fill="#7d7f88"/><rect x="679" y="668" width="4" height="4" fill="#b9c2cc"/><rect x="683" y="664" width="4" height="4" fill="#b3d8f5"/><rect x="683" y="668" width="4" height="4" fill="#7b86b8"/><rect x="687" y="664" width="4" height="4" fill="#b9c2cc"/><rect x="691" y="664" width="4" height="4" fill="#b9c2cc"/><rect x="691" y="668" width="4" height="4" fill="#7b86b8"/><rect x="703" y="664" width="4" height="4" fill="#6b6f7e"/><rect x="703" y="668" width="4" height="4" fill="#f3ede2"/><rect x="711" y="664" width="4" height="4" fill="#eef0f3"/><rect x="711" y="668" width="4" height="4" fill="#7b86b8"/><rect x="715" y="664" width="4" height="4" fill="#9fa9b8"/><rect x="715" y="668" width="4" height="4" fill="#6b6f7e"/><rect x="719" y="668" width="4" height="4" fill="#d9b79a"/><rect x="727" y="664" width="4" height="4" fill="#7d7f88"/><rect x="727" y="668" width="4" height="4" fill="#9097a6"/><rect x="731" y="664" width="4" height="4" fill="#b3d8f5"/><rect x="731" y="668" width="4" height="4" fill="#9097a6"/><rect x="735" y="664" width="4" height="4" fill="#e0c4a8"/><rect x="747" y="664" width="4" height="4" fill="#7d7f88"/><rect x="747" y="668" width="4" height="4" fill="#9097a6"/><rect x="751" y="664" width="4" height="4" fill="#6b6f7e"/><rect x="751" y="668" width="4" height="4" fill="#9097a6"/><rect x="755" y="664" width="4" height="4" fill="#a8b4c4"/><rect x="759" y="664" width="4" height="4" fill="#c9b19a"/><rect x="759" y="668" width="4" height="4" fill="#a8b4c4"/><rect x="763" y="668" width="4" height="4" fill="#8c7468"/><rect x="767" y="664" width="4" height="4" fill="#6b6f7e"/><rect x="767" y="668" width="4" height="4" fill="#7b86b8"/><rect x="775" y="664" width="4" height="4" fill="#eef0f3"/><rect x="779" y="664" width="4" height="4" fill="#7d7f88"/><rect x="783" y="664" width="4" height="4" fill="#6b6f7e"/><rect x="783" y="668" width="4" height="4" fill="#a08878"/><rect x="787" y="664" width="4" height="4" fill="#6f7590"/><rect x="791" y="664" width="4" height="4" fill="#7d7f88"/><rect x="791" y="668" width="4" height="4" fill="#f3ede2"/><rect x="795" y="668" width="4" height="4" fill="#8c7468"/><rect x="799" y="664" width="4" height="4" fill="#6b6f7e"/><rect x="799" y="668" width="4" height="4" fill="#6f7590"/><rect x="803" y="664" width="4" height="4" fill="#e0c4a8"/><rect x="803" y="668" width="4" height="4" fill="#6b6f7e"/><rect x="819" y="664" width="4" height="4" fill="#7b86b8"/><rect x="819" y="668" width="4" height="4" fill="#7d7f88"/><rect x="823" y="664" width="4" height="4" fill="#7b86b8"/><rect x="823" y="668" width="4" height="4" fill="#b9c2cc"/><rect x="827" y="664" width="4" height="4" fill="#e8f0f5"/><rect x="831" y="664" width="4" height="4" fill="#8a8b90"/><rect x="831" y="668" width="4" height="4" fill="#a08878"/><rect x="835" y="668" width="4" height="4" fill="#9ab6dc"/><rect x="839" y="664" width="4" height="4" fill="#6f7590"/><rect x="839" y="668" width="4" height="4" fill="#b9c2cc"/><rect x="843" y="664" width="4" height="4" fill="#9fa9b8"/><rect x="847" y="664" width="4" height="4" fill="#7b86b8"/><rect x="615" y="672" width="4" height="4" fill="#e8f0f5"/><rect x="619" y="672" width="4" height="4" fill="#b3d8f5"/><rect x="659" y="672" width="4" height="4" fill="#8c7468"/><rect x="683" y="660" width="4" height="4" fill="#9ab6dc"/><rect x="699" y="660" width="4" height="4" fill="#a08878"/><rect x="751" y="660" width="4" height="4" fill="#eef0f3"/><rect x="823" y="660" width="4" height="4" fill="#6f7590"/><rect x="835" y="672" width="4" height="4" fill="#7b86b8"/><rect x="839" y="660" width="4" height="4" fill="#8c7468"/><rect x="839" y="672" width="4" height="4" fill="#f3ede2"/><rect x="611" y="680" width="108" height="20" fill="#f4f4f4"/><rect x="619" y="688" width="4" height="4" fill="#a08878"/><rect x="623" y="688" width="4" height="4" fill="#9097a6"/><rect x="627" y="688" width="4" height="4" fill="#6b6f7e"/><rect x="631" y="688" width="4" height="4" fill="#dceefa"/><rect x="631" y="692" width="4" height="4" fill="#a8b4c4"/><rect x="635" y="692" width="4" height="4" fill="#a8b4c4"/><rect x="639" y="688" width="4" height="4" fill="#9097a6"/><rect x="643" y="688" width="4" height="4" fill="#7b86b8"/><rect x="647" y="692" width="4" height="4" fill="#b9c2cc"/><rect x="651" y="688" width="4" height="4" fill="#fde9c0"/><rect x="655" y="688" width="4" height="4" fill="#a08878"/><rect x="655" y="692" width="4" height="4" fill="#e0c4a8"/><rect x="663" y="688" width="4" height="4" fill="#a08878"/><rect x="667" y="688" width="4" height="4" fill="#dceefa"/><rect x="667" y="692" width="4" height="4" fill="#9fa9b8"/><rect x="671" y="688" width="4" height="4" fill="#8a8b90"/><rect x="671" y="692" width="4" height="4" fill="#9fa9b8"/><rect x="679" y="688" width="4" height="4" fill="#e8f0f5"/><rect x="679" y="692" width="4" height="4" fill="#f5e3d3"/><rect x="683" y="688" width="4" height="4" fill="#7d7f88"/><rect x="687" y="688" width="4" height="4" fill="#6b6f7e"/><rect x="687" y="692" width="4" height="4" fill="#dceefa"/><rect x="691" y="688" width="4" height="4" fill="#7b86b8"/><rect x="695" y="688" width="4" height="4" fill="#9ab6dc"/><rect x="695" y="692" width="4" height="4" fill="#8a8b90"/><rect x="699" y="692" width="4" height="4" fill="#a08878"/><rect x="703" y="688" width="4" height="4" fill="#7b86b8"/><rect x="703" y="692" width="4" height="4" fill="#dceefa"/><rect x="707" y="692" width="4" height="4" fill="#e0c4a8"/><rect x="727" y="688" width="4" height="4" fill="#b3d8f5"/><rect x="731" y="688" width="4" height="4" fill="#c9b19a"/><rect x="731" y="692" width="4" height="4" fill="#6b6f7e"/><rect x="735" y="688" width="4" height="4" fill="#7d7f88"/><rect x="735" y="692" width="4" height="4" fill="#e8f0f5"/><rect x="739" y="688" width="4" height="4" fill="#e0c4a8"/><rect x="743" y="688" width="4" height="4" fill="#e8f0f5"/><rect x="743" y="692" width="4" height="4" fill="#a08878"/><rect x="747" y="688" width="4" height="4" fill="#7b86b8"/><rect x="747" y="692" width="4" height="4" fill="#eef0f3"/><rect x="759" y="688" width="4" height="4" fill="#9fa9b8"/><rect x="759" y="692" width="4" height="4" fill="#7b86b8"/><rect x="763" y="688" width="4" height="4" fill="#9097a6"/><rect x="767" y="688" width="4" height="4" fill="#6f7590"/><rect x="771" y="688" width="4" height="4" fill="#a08878"/><rect x="771" y="692" width="4" height="4" fill="#6f7590"/><rect x="775" y="688" width="4" height="4" fill="#a8b4c4"/><rect x="775" y="692" width="4" height="4" fill="#eef0f3"/><rect x="779" y="688" width="4" height="4" fill="#f3ede2"/><rect x="779" y="692" width="4" height="4" fill="#f5e3d3"/><rect x="783" y="688" width="4" height="4" fill="#8a8b90"/><rect x="783" y="692" width="4" height="4" fill="#d9b79a"/><rect x="787" y="688" width="4" height="4" fill="#e8f0f5"/><rect x="787" y="692" width="4" height="4" fill="#a8b4c4"/><rect x="791" y="688" width="4" height="4" fill="#dceefa"/><rect x="791" y="692" width="4" height="4" fill="#f3ede2"/><rect x="803" y="688" width="4" height="4" fill="#a08878"/><rect x="803" y="692" width="4" height="4" fill="#7b86b8"/><rect x="807" y="692" width="4" height="4" fill="#f5e3d3"/><rect x="811" y="688" width="4" height="4" fill="#c9b19a"/><rect x="811" y="692" width="4" height="4" fill="#8c7468"/><rect x="819" y="688" width="4" height="4" fill="#f3ede2"/><rect x="823" y="688" width="4" height="4" fill="#d9b79a"/><rect x="823" y="692" width="4" height="4" fill="#9ab6dc"/><rect x="827" y="688" width="4" height="4" fill="#6f7590"/><rect x="827" y="692" width="4" height="4" fill="#d9b79a"/><rect x="831" y="688" width="4" height="4" fill="#b9c2cc"/><rect x="831" y="692" width="4" height="4" fill="#6f7590"/><rect x="835" y="688" width="4" height="4" fill="#dceefa"/><rect x="835" y="692" width="4" height="4" fill="#9097a6"/><rect x="839" y="688" width="4" height="4" fill="#6b6f7e"/><rect x="839" y="692" width="4" height="4" fill="#7b86b8"/><rect x="763" y="684" width="4" height="4" fill="#b9c2cc"/><rect x="779" y="684" width="4" height="4" fill="#b3d8f5"/><rect x="811" y="684" width="4" height="4" fill="#b9c2cc"/><rect x="835" y="696" width="4" height="4" fill="#a08878"/><rect x="611" y="724" width="4" height="4" fill="#a08878"/><rect x="611" y="728" width="4" height="4" fill="#8a8b90"/><rect x="615" y="724" width="4" height="4" fill="#7b86b8"/><rect x="615" y="728" width="4" height="4" fill="#7d7f88"/><rect x="619" y="724" width="4" height="4" fill="#b3d8f5"/><rect x="623" y="724" width="4" height="4" fill="#7b86b8"/><rect x="627" y="728" width="4" height="4" fill="#eef0f3"/><rect x="631" y="724" width="4" height="4" fill="#b9c2cc"/><rect x="631" y="728" width="4" height="4" fill="#7d7f88"/><rect x="639" y="724" width="4" height="4" fill="#7b86b8"/><rect x="639" y="728" width="4" height="4" fill="#6f7590"/><rect x="643" y="724" width="4" height="4" fill="#8c7468"/><rect x="647" y="724" width="4" height="4" fill="#b9c2cc"/><rect x="647" y="728" width="4" height="4" fill="#8a8b90"/><rect x="651" y="724" width="4" height="4" fill="#7b86b8"/><rect x="651" y="728" width="4" height="4" fill="#7d7f88"/><rect x="655" y="724" width="4" height="4" fill="#e8f0f5"/><rect x="655" y="728" width="4" height="4" fill="#b9c2cc"/><rect x="659" y="724" width="4" height="4" fill="#6f7590"/><rect x="659" y="728" width="4" height="4" fill="#fde9c0"/><rect x="663" y="724" width="4" height="4" fill="#a08878"/><rect x="663" y="728" width="4" height="4" fill="#c9b19a"/><rect x="667" y="724" width="4" height="4" fill="#9097a6"/><rect x="667" y="728" width="4" height="4" fill="#e8f0f5"/><rect x="671" y="724" width="4" height="4" fill="#7b86b8"/><rect x="671" y="728" width="4" height="4" fill="#6f7590"/><rect x="675" y="724" width="4" height="4" fill="#6b6f7e"/><rect x="675" y="728" width="4" height="4" fill="#f3ede2"/><rect x="679" y="724" width="4" height="4" fill="#7b86b8"/><rect x="679" y="728" width="4" height="4" fill="#f5e3d3"/><rect x="691" y="724" width="4" height="4" fill="#b3d8f5"/><rect x="695" y="724" width="4" height="4" fill="#f5e3d3"/><rect x="695" y="728" width="4" height="4" fill="#7d7f88"/><rect x="699" y="724" width="4" height="4" fill="#dceefa"/><rect x="699" y="728" width="4" height="4" fill="#6b6f7e"/><rect x="711" y="724" width="4" height="4" fill="#dceefa"/><rect x="711" y="728" width="4" height="4" fill="#9fa9b8"/><rect x="715" y="724" width="4" height="4" fill="#8c7468"/><rect x="719" y="724" width="4" height="4" fill="#f5e3d3"/><rect x="719" y="728" width="4" height="4" fill="#e0c4a8"/><rect x="723" y="724" width="4" height="4" fill="#a8b4c4"/><rect x="723" y="728" width="4" height="4" fill="#eef0f3"/><rect x="727" y="724" width="4" height="4" fill="#b9c2cc"/><rect x="727" y="728" width="4" height="4" fill="#8c7468"/><rect x="735" y="724" width="4" height="4" fill="#a08878"/><rect x="735" y="728" width="4" height="4" fill="#9fa9b8"/><rect x="739" y="724" width="4" height="4" fill="#9ab6dc"/><rect x="739" y="728" width="4" height="4" fill="#e0c4a8"/><rect x="743" y="724" width="4" height="4" fill="#f5e3d3"/><rect x="743" y="728" width="4" height="4" fill="#fde9c0"/><rect x="747" y="724" width="4" height="4" fill="#dceefa"/><rect x="751" y="724" width="4" height="4" fill="#6b6f7e"/><rect x="751" y="728" width="4" height="4" fill="#e0c4a8"/><rect x="755" y="724" width="4" height="4" fill="#e8f0f5"/><rect x="755" y="728" width="4" height="4" fill="#7d7f88"/><rect x="763" y="724" width="4" height="4" fill="#a8b4c4"/><rect x="763" y="728" width="4" height="4" fill="#b3d8f5"/><rect x="767" y="724" width="4" height="4" fill="#b9c2cc"/><rect x="767" y="728" width="4" height="4" fill="#a08878"/><rect x="771" y="724" width="4" height="4" fill="#a8b4c4"/><rect x="771" y="728" width="4" height="4" fill="#8c7468"/><rect x="775" y="724" width="4" height="4" fill="#a08878"/><rect x="775" y="728" width="4" height="4" fill="#d9b79a"/><rect x="779" y="724" width="4" height="4" fill="#7d7f88"/><rect x="779" y="728" width="4" height="4" fill="#6f7590"/><rect x="783" y="724" width="4" height="4" fill="#b3d8f5"/><rect x="787" y="724" width="4" height="4" fill="#7b86b8"/><rect x="787" y="728" width="4" height="4" fill="#9097a6"/><rect x="791" y="724" width="4" height="4" fill="#6b6f7e"/><rect x="795" y="724" width="4" height="4" fill="#d9b79a"/><rect x="799" y="728" width="4" height="4" fill="#9ab6dc"/><rect x="807" y="724" width="4" height="4" fill="#7b86b8"/><rect x="807" y="728" width="4" height="4" fill="#a8b4c4"/><rect x="811" y="724" width="4" height="4" fill="#f5e3d3"/><rect x="811" y="728" width="4" height="4" fill="#9097a6"/><rect x="815" y="724" width="4" height="4" fill="#8c7468"/><rect x="815" y="728" width="4" height="4" fill="#b9c2cc"/><rect x="819" y="724" width="4" height="4" fill="#b3d8f5"/><rect x="819" y="728" width="4" height="4" fill="#a8b4c4"/><rect x="823" y="724" width="4" height="4" fill="#9097a6"/><rect x="835" y="728" width="4" height="4" fill="#b3d8f5"/><rect x="839" y="724" width="4" height="4" fill="#e8f0f5"/><rect x="839" y="728" width="4" height="4" fill="#8a8b90"/><rect x="843" y="724" width="4" height="4" fill="#9fa9b8"/><rect x="843" y="728" width="4" height="4" fill="#6f7590"/><rect x="855" y="724" width="4" height="4" fill="#e8f0f5"/><rect x="859" y="724" width="4" height="4" fill="#9ab6dc"/><rect x="863" y="728" width="4" height="4" fill="#7d7f88"/><rect x="867" y="728" width="4" height="4" fill="#8c7468"/><rect x="871" y="724" width="4" height="4" fill="#d9b79a"/><rect x="871" y="728" width="4" height="4" fill="#7d7f88"/><rect x="875" y="724" width="4" height="4" fill="#e0c4a8"/><rect x="875" y="728" width="4" height="4" fill="#e0c4a8"/><rect x="879" y="724" width="4" height="4" fill="#b3d8f5"/><rect x="879" y="728" width="4" height="4" fill="#fde9c0"/><rect x="883" y="724" width="4" height="4" fill="#a08878"/><rect x="883" y="728" width="4" height="4" fill="#eef0f3"/><rect x="887" y="724" width="4" height="4" fill="#6f7590"/><rect x="887" y="728" width="4" height="4" fill="#7d7f88"/><rect x="891" y="724" width="4" height="4" fill="#6f7590"/><rect x="891" y="728" width="4" height="4" fill="#e8f0f5"/><rect x="895" y="724" width="4" height="4" fill="#e0c4a8"/><rect x="895" y="728" width="4" height="4" fill="#fde9c0"/><rect x="899" y="728" width="4" height="4" fill="#8c7468"/><rect x="907" y="724" width="4" height="4" fill="#9fa9b8"/><rect x="907" y="728" width="4" height="4" fill="#a8b4c4"/><rect x="911" y="724" width="4" height="4" fill="#6b6f7e"/><rect x="911" y="728" width="4" height="4" fill="#9fa9b8"/><rect x="915" y="724" width="4" height="4" fill="#7b86b8"/><rect x="919" y="724" width="4" height="4" fill="#e0c4a8"/><rect x="919" y="728" width="4" height="4" fill="#b3d8f5"/><rect x="923" y="724" width="4" height="4" fill="#8c7468"/><rect x="923" y="728" width="4" height="4" fill="#dceefa"/><rect x="927" y="724" width="4" height="4" fill="#e0c4a8"/><rect x="927" y="728" width="4" height="4" fill="#fde9c0"/><rect x="623" y="720" width="4" height="4" fill="#8c7468"/><rect x="631" y="732" width="4" height="4" fill="#eef0f3"/><rect x="699" y="732" width="4" height="4" fill="#e8f0f5"/><rect x="763" y="720" width="4" height="4" fill="#eef0f3"/><rect x="783" y="720" width="4" height="4" fill="#8a8b90"/><rect x="807" y="720" width="4" height="4" fill="#9fa9b8"/><rect x="863" y="732" width="4" height="4" fill="#b3d8f5"/><rect x="923" y="732" width="4" height="4" fill="#f3ede2"/><rect x="611" y="744" width="104" height="16" fill="#f4f4f4"/><rect x="619" y="748" width="4" height="4" fill="#6b6f7e"/><rect x="619" y="752" width="4" height="4" fill="#b3d8f5"/><rect x="623" y="752" width="4" height="4" fill="#7d7f88"/><rect x="627" y="748" width="4" height="4" fill="#f5e3d3"/><rect x="627" y="752" width="4" height="4" fill="#7d7f88"/><rect x="631" y="752" width="4" height="4" fill="#b9c2cc"/><rect x="635" y="748" width="4" height="4" fill="#6f7590"/><rect x="635" y="752" width="4" height="4" fill="#9fa9b8"/><rect x="639" y="748" width="4" height="4" fill="#b9c2cc"/><rect x="643" y="748" width="4" height="4" fill="#dceefa"/><rect x="651" y="748" width="4" height="4" fill="#a8b4c4"/><rect x="651" y="752" width="4" height="4" fill="#d9b79a"/><rect x="655" y="748" width="4" height="4" fill="#7d7f88"/><rect x="659" y="748" width="4" height="4" fill="#8c7468"/><rect x="671" y="748" width="4" height="4" fill="#f5e3d3"/><rect x="671" y="752" width="4" height="4" fill="#e0c4a8"/><rect x="675" y="748" width="4" height="4" fill="#7d7f88"/><rect x="675" y="752" width="4" height="4" fill="#9097a6"/><rect x="679" y="748" width="4" height="4" fill="#8a8b90"/><rect x="679" y="752" width="4" height="4" fill="#9ab6dc"/><rect x="683" y="748" width="4" height="4" fill="#8a8b90"/><rect x="687" y="748" width="4" height="4" fill="#a08878"/><rect x="687" y="752" width="4" height="4" fill="#d9b79a"/><rect x="691" y="748" width="4" height="4" fill="#7b86b8"/><rect x="695" y="748" width="4" height="4" fill="#b9c2cc"/><rect x="695" y="752" width="4" height="4" fill="#6f7590"/><rect x="699" y="752" width="4" height="4" fill="#9fa9b8"/><rect x="703" y="748" width="4" height="4" fill="#eef0f3"/><rect x="703" y="752" width="4" height="4" fill="#e8f0f5"/><rect x="675" y="744" width="4" height="4" fill="#7b86b8"/><rect x="703" y="744" width="4" height="4" fill="#9ab6dc"/><rect x="731" y="748" width="4" height="4" fill="#e8f0f5"/><rect x="735" y="748" width="4" height="4" fill="#e0c4a8"/><rect x="735" y="752" width="4" height="4" fill="#6f7590"/><rect x="739" y="748" width="4" height="4" fill="#9fa9b8"/><rect x="739" y="752" width="4" height="4" fill="#e8f0f5"/><rect x="743" y="748" width="4" height="4" fill="#f5e3d3"/><rect x="743" y="752" width="4" height="4" fill="#6f7590"/><rect x="747" y="748" width="4" height="4" fill="#f3ede2"/><rect x="747" y="752" width="4" height="4" fill="#b3d8f5"/><rect x="755" y="748" width="4" height="4" fill="#dceefa"/><rect x="759" y="748" width="4" height="4" fill="#7d7f88"/><rect x="759" y="752" width="4" height="4" fill="#b9c2cc"/><rect x="763" y="748" width="4" height="4" fill="#b9c2cc"/><rect x="763" y="752" width="4" height="4" fill="#f5e3d3"/><rect x="767" y="748" width="4" height="4" fill="#a8b4c4"/><rect x="767" y="752" width="4" height="4" fill="#9ab6dc"/><rect x="771" y="748" width="4" height="4" fill="#d9b79a"/><rect x="771" y="752" width="4" height="4" fill="#a08878"/><rect x="775" y="748" width="4" height="4" fill="#7b86b8"/><rect x="775" y="752" width="4" height="4" fill="#b9c2cc"/><rect x="779" y="748" width="4" height="4" fill="#b9c2cc"/><rect x="779" y="752" width="4" height="4" fill="#b3d8f5"/><rect x="783" y="748" width="4" height="4" fill="#b9c2cc"/><rect x="783" y="752" width="4" height="4" fill="#e8f0f5"/><rect x="787" y="748" width="4" height="4" fill="#8c7468"/><rect x="787" y="752" width="4" height="4" fill="#8c7468"/><rect x="791" y="748" width="4" height="4" fill="#6b6f7e"/><rect x="791" y="752" width="4" height="4" fill="#e8f0f5"/><rect x="795" y="748" width="4" height="4" fill="#7d7f88"/><rect x="795" y="752" width="4" height="4" fill="#7b86b8"/><rect x="807" y="748" width="4" height="4" fill="#e0c4a8"/><rect x="739" y="744" width="4" height="4" fill="#6f7590"/><rect x="787" y="744" width="4" height="4" fill="#7d7f88"/><rect x="795" y="756" width="4" height="4" fill="#7b86b8"/><rect x="611" y="784" width="4" height="4" fill="#8a8b90"/><rect x="615" y="784" width="4" height="4" fill="#7d7f88"/><rect x="615" y="788" width="4" height="4" fill="#d9b79a"/><rect x="619" y="788" width="4" height="4" fill="#b9c2cc"/><rect x="623" y="784" width="4" height="4" fill="#d9b79a"/><rect x="623" y="788" width="4" height="4" fill="#7d7f88"/><rect x="627" y="784" width="4" height="4" fill="#dceefa"/><rect x="627" y="788" width="4" height="4" fill="#f3ede2"/><rect x="631" y="784" width="4" height="4" fill="#c9b19a"/><rect x="631" y="788" width="4" height="4" fill="#f5e3d3"/><rect x="635" y="784" width="4" height="4" fill="#9097a6"/><rect x="635" y="788" width="4" height="4" fill="#8c7468"/><rect x="639" y="788" width="4" height="4" fill="#7b86b8"/><rect x="651" y="784" width="4" height="4" fill="#c9b19a"/><rect x="651" y="788" width="4" height="4" fill="#b9c2cc"/><rect x="655" y="784" width="4" height="4" fill="#fde9c0"/><rect x="655" y="788" width="4" height="4" fill="#8a8b90"/><rect x="659" y="784" width="4" height="4" fill="#b9c2cc"/><rect x="659" y="788" width="4" height="4" fill="#6f7590"/><rect x="663" y="784" width="4" height="4" fill="#9fa9b8"/><rect x="663" y="788" width="4" height="4" fill="#a8b4c4"/><rect x="667" y="788" width="4" height="4" fill="#b9c2cc"/><rect x="671" y="784" width="4" height="4" fill="#9097a6"/><rect x="671" y="788" width="4" height="4" fill="#c9b19a"/><rect x="675" y="784" width="4" height="4" fill="#b9c2cc"/><rect x="683" y="784" width="4" height="4" fill="#7b86b8"/><rect x="683" y="788" width="4" height="4" fill="#7b86b8"/><rect x="687" y="784" width="4" height="4" fill="#7b86b8"/><rect x="687" y="788" width="4" height="4" fill="#f5e3d3"/><rect x="691" y="784" width="4" height="4" fill="#7d7f88"/><rect x="691" y="788" width="4" height="4" fill="#e8f0f5"/><rect x="695" y="788" width="4" height="4" fill="#8c7468"/><rect x="699" y="784" width="4" height="4" fill="#c9b19a"/><rect x="699" y="788" width="4" height="4" fill="#a08878"/><rect x="703" y="784" width="4" height="4" fill="#7d7f88"/><rect x="703" y="788" width="4" height="4" fill="#b9c2cc"/><rect x="707" y="784" width="4" height="4" fill="#d9b79a"/><rect x="707" y="788" width="4" height="4" fill="#8c7468"/><rect x="711" y="784" width="4" height="4" fill="#6f7590"/><rect x="719" y="784" width="4" height="4" fill="#c9b19a"/><rect x="719" y="788" width="4" height="4" fill="#8c7468"/><rect x="723" y="784" width="4" height="4" fill="#6f7590"/><rect x="723" y="788" width="4" height="4" fill="#b9c2cc"/><rect x="731" y="784" width="4" height="4" fill="#9097a6"/><rect x="735" y="784" width="4" height="4" fill="#7b86b8"/><rect x="739" y="784" width="4" height="4" fill="#fde9c0"/><rect x="739" y="788" width="4" height="4" fill="#a08878"/><rect x="743" y="784" width="4" height="4" fill="#7d7f88"/><rect x="743" y="788" width="4" height="4" fill="#9097a6"/><rect x="747" y="784" width="4" height="4" fill="#f3ede2"/><rect x="747" y="788" width="4" height="4" fill="#a08878"/><rect x="755" y="784" width="4" height="4" fill="#a08878"/><rect x="755" y="788" width="4" height="4" fill="#9fa9b8"/><rect x="759" y="784" width="4" height="4" fill="#8a8b90"/><rect x="759" y="788" width="4" height="4" fill="#c9b19a"/><rect x="763" y="788" width="4" height="4" fill="#9ab6dc"/><rect x="767" y="784" width="4" height="4" fill="#8a8b90"/><rect x="767" y="788" width="4" height="4" fill="#a08878"/><rect x="771" y="784" width="4" height="4" fill="#b3d8f5"/><rect x="771" y="788" width="4" height="4" fill="#b9c2cc"/><rect x="775" y="784" width="4" height="4" fill="#9fa9b8"/><rect x="775" y="788" width="4" height="4" fill="#eef0f3"/><rect x="779" y="784" width="4" height="4" fill="#e0c4a8"/><rect x="779" y="788" width="4" height="4" fill="#9097a6"/><rect x="783" y="784" width="4" height="4" fill="#d9b79a"/><rect x="783" y="788" width="4" height="4" fill="#b3d8f5"/><rect x="787" y="784" width="4" height="4" fill="#8a8b90"/><rect x="787" y="788" width="4" height="4" fill="#9fa9b8"/><rect x="791" y="788" width="4" height="4" fill="#c9b19a"/><rect x="799" y="784" width="4" height="4" fill="#b9c2cc"/><rect x="799" y="788" width="4" height="4" fill="#6b6f7e"/><rect x="803" y="784" width="4" height="4" fill="#a08878"/><rect x="803" y="788" width="4" height="4" fill="#c9b19a"/><rect x="807" y="784" width="4" height="4" fill="#9ab6dc"/><rect x="807" y="788" width="4" height="4" fill="#9ab6dc"/><rect x="811" y="784" width="4" height="4" fill="#d9b79a"/><rect x="811" y="788" width="4" height="4" fill="#f5e3d3"/><rect x="815" y="784" width="4" height="4" fill="#b3d8f5"/><rect x="815" y="788" width="4" height="4" fill="#6b6f7e"/><rect x="819" y="784" width="4" height="4" fill="#fde9c0"/><rect x="819" y="788" width="4" height="4" fill="#c9b19a"/><rect x="823" y="784" width="4" height="4" fill="#e8f0f5"/><rect x="823" y="788" width="4" height="4" fill="#b9c2cc"/><rect x="827" y="784" width="4" height="4" fill="#9ab6dc"/><rect x="827" y="788" width="4" height="4" fill="#6f7590"/><rect x="831" y="784" width="4" height="4" fill="#fde9c0"/><rect x="831" y="788" width="4" height="4" fill="#eef0f3"/><rect x="835" y="784" width="4" height="4" fill="#8a8b90"/><rect x="835" y="788" width="4" height="4" fill="#c9b19a"/><rect x="843" y="788" width="4" height="4" fill="#a08878"/><rect x="847" y="784" width="4" height="4" fill="#a08878"/><rect x="847" y="788" width="4" height="4" fill="#d9b79a"/><rect x="623" y="792" width="4" height="4" fill="#c9b19a"/><rect x="631" y="780" width="4" height="4" fill="#6b6f7e"/><rect x="695" y="792" width="4" height="4" fill="#b9c2cc"/><rect x="771" y="780" width="4" height="4" fill="#a08878"/><rect x="847" y="780" width="4" height="4" fill="#6f7590"/><rect x="611" y="804" width="108" height="16" fill="#f4f4f4"/><rect x="619" y="812" width="4" height="4" fill="#f5e3d3"/><rect x="623" y="808" width="4" height="4" fill="#7b86b8"/><rect x="623" y="812" width="4" height="4" fill="#a8b4c4"/><rect x="627" y="808" width="4" height="4" fill="#f3ede2"/><rect x="631" y="808" width="4" height="4" fill="#9ab6dc"/><rect x="631" y="812" width="4" height="4" fill="#7d7f88"/><rect x="635" y="808" width="4" height="4" fill="#e0c4a8"/><rect x="635" y="812" width="4" height="4" fill="#fde9c0"/><rect x="639" y="808" width="4" height="4" fill="#7d7f88"/><rect x="643" y="808" width="4" height="4" fill="#7b86b8"/><rect x="643" y="812" width="4" height="4" fill="#7b86b8"/><rect x="651" y="812" width="4" height="4" fill="#f3ede2"/><rect x="655" y="808" width="4" height="4" fill="#8a8b90"/><rect x="655" y="812" width="4" height="4" fill="#8a8b90"/><rect x="659" y="812" width="4" height="4" fill="#6b6f7e"/><rect x="663" y="808" width="4" height="4" fill="#6b6f7e"/><rect x="663" y="812" width="4" height="4" fill="#9097a6"/><rect x="667" y="808" width="4" height="4" fill="#fde9c0"/><rect x="667" y="812" width="4" height="4" fill="#8a8b90"/><rect x="671" y="808" width="4" height="4" fill="#8c7468"/><rect x="671" y="812" width="4" height="4" fill="#7d7f88"/><rect x="675" y="808" width="4" height="4" fill="#fde9c0"/><rect x="675" y="812" width="4" height="4" fill="#6b6f7e"/><rect x="683" y="808" width="4" height="4" fill="#d9b79a"/><rect x="683" y="812" width="4" height="4" fill="#9ab6dc"/><rect x="687" y="808" width="4" height="4" fill="#f5e3d3"/><rect x="687" y="812" width="4" height="4" fill="#a8b4c4"/><rect x="691" y="808" width="4" height="4" fill="#f3ede2"/><rect x="691" y="812" width="4" height="4" fill="#8a8b90"/><rect x="695" y="812" width="4" height="4" fill="#6f7590"/><rect x="699" y="808" width="4" height="4" fill="#a08878"/><rect x="703" y="808" width="4" height="4" fill="#f3ede2"/><rect x="703" y="812" width="4" height="4" fill="#9fa9b8"/><rect x="707" y="808" width="4" height="4" fill="#c9b19a"/><rect x="707" y="812" width="4" height="4" fill="#7b86b8"/><rect x="639" y="804" width="4" height="4" fill="#9ab6dc"/><rect x="731" y="808" width="4" height="4" fill="#8c7468"/><rect x="731" y="812" width="4" height="4" fill="#6b6f7e"/><rect x="735" y="808" width="4" height="4" fill="#7d7f88"/><rect x="735" y="812" width="4" height="4" fill="#7b86b8"/><rect x="739" y="808" width="4" height="4" fill="#7b86b8"/><rect x="739" y="812" width="4" height="4" fill="#d9b79a"/><rect x="743" y="808" width="4" height="4" fill="#6b6f7e"/><rect x="743" y="812" width="4" height="4" fill="#dceefa"/><rect x="747" y="808" width="4" height="4" fill="#b9c2cc"/><rect x="747" y="812" width="4" height="4" fill="#8a8b90"/><rect x="751" y="808" width="4" height="4" fill="#e0c4a8"/><rect x="751" y="812" width="4" height="4" fill="#a8b4c4"/><rect x="755" y="808" width="4" height="4" fill="#eef0f3"/><rect x="755" y="812" width="4" height="4" fill="#6b6f7e"/><rect x="763" y="808" width="4" height="4" fill="#b3d8f5"/><rect x="763" y="812" width="4" height="4" fill="#b3d8f5"/><rect x="775" y="808" width="4" height="4" fill="#a08878"/><rect x="775" y="812" width="4" height="4" fill="#8c7468"/><rect x="779" y="808" width="4" height="4" fill="#6f7590"/><rect x="779" y="812" width="4" height="4" fill="#7d7f88"/><rect x="783" y="808" width="4" height="4" fill="#8a8b90"/><rect x="795" y="808" width="4" height="4" fill="#b9c2cc"/><rect x="795" y="812" width="4" height="4" fill="#8a8b90"/><rect x="799" y="808" width="4" height="4" fill="#f5e3d3"/><rect x="799" y="812" width="4" height="4" fill="#8c7468"/><rect x="803" y="812" width="4" height="4" fill="#b9c2cc"/><rect x="807" y="808" width="4" height="4" fill="#fde9c0"/><rect x="807" y="812" width="4" height="4" fill="#9097a6"/><rect x="811" y="808" width="4" height="4" fill="#6f7590"/><rect x="811" y="812" width="4" height="4" fill="#e0c4a8"/><rect x="779" y="816" width="4" height="4" fill="#a08878"/><rect x="799" y="816" width="4" height="4" fill="#e8f0f5"/><rect x="807" y="804" width="4" height="4" fill="#8c7468"/><rect x="611" y="844" width="4" height="4" fill="#fde9c0"/><rect x="615" y="844" width="4" height="4" fill="#6b6f7e"/><rect x="615" y="848" width="4" height="4" fill="#a8b4c4"/><rect x="619" y="844" width="4" height="4" fill="#7b86b8"/><rect x="619" y="848" width="4" height="4" fill="#9097a6"/><rect x="623" y="844" width="4" height="4" fill="#eef0f3"/><rect x="623" y="848" width="4" height="4" fill="#f3ede2"/><rect x="627" y="844" width="4" height="4" fill="#f5e3d3"/><rect x="627" y="848" width="4" height="4" fill="#f5e3d3"/><rect x="631" y="844" width="4" height="4" fill="#6f7590"/><rect x="631" y="848" width="4" height="4" fill="#fde9c0"/><rect x="643" y="844" width="4" height="4" fill="#8c7468"/><rect x="643" y="848" width="4" height="4" fill="#6b6f7e"/><rect x="647" y="844" width="4" height="4" fill="#9ab6dc"/><rect x="647" y="848" width="4" height="4" fill="#6f7590"/><rect x="651" y="844" width="4" height="4" fill="#f3ede2"/><rect x="659" y="844" width="4" height="4" fill="#9ab6dc"/><rect x="659" y="848" width="4" height="4" fill="#eef0f3"/><rect x="667" y="844" width="4" height="4" fill="#9fa9b8"/><rect x="667" y="848" width="4" height="4" fill="#f3ede2"/><rect x="671" y="844" width="4" height="4" fill="#fde9c0"/><rect x="671" y="848" width="4" height="4" fill="#8a8b90"/><rect x="683" y="844" width="4" height="4" fill="#6b6f7e"/><rect x="683" y="848" width="4" height="4" fill="#8a8b90"/><rect x="687" y="844" width="4" height="4" fill="#9ab6dc"/><rect x="687" y="848" width="4" height="4" fill="#a08878"/><rect x="691" y="844" width="4" height="4" fill="#a8b4c4"/><rect x="691" y="848" width="4" height="4" fill="#dceefa"/><rect x="695" y="844" width="4" height="4" fill="#a08878"/><rect x="695" y="848" width="4" height="4" fill="#6b6f7e"/><rect x="699" y="844" width="4" height="4" fill="#fde9c0"/><rect x="699" y="848" width="4" height="4" fill="#fde9c0"/><rect x="703" y="844" width="4" height="4" fill="#b9c2cc"/><rect x="703" y="848" width="4" height="4" fill="#b9c2cc"/><rect x="707" y="844" width="4" height="4" fill="#e0c4a8"/><rect x="707" y="848" width="4" height="4" fill="#7b86b8"/><rect x="715" y="844" width="4" height="4" fill="#6b6f7e"/><rect x="719" y="844" width="4" height="4" fill="#b9c2cc"/><rect x="719" y="848" width="4" height="4" fill="#9ab6dc"/><rect x="723" y="844" width="4" height="4" fill="#e0c4a8"/><rect x="723" y="848" width="4" height="4" fill="#6f7590"/><rect x="727" y="844" width="4" height="4" fill="#b9c2cc"/><rect x="727" y="848" width="4" height="4" fill="#8c7468"/><rect x="731" y="844" width="4" height="4" fill="#f5e3d3"/><rect x="731" y="848" width="4" height="4" fill="#7b86b8"/><rect x="735" y="844" width="4" height="4" fill="#eef0f3"/><rect x="735" y="848" width="4" height="4" fill="#f3ede2"/><rect x="743" y="844" width="4" height="4" fill="#8a8b90"/><rect x="747" y="844" width="4" height="4" fill="#8c7468"/><rect x="751" y="844" width="4" height="4" fill="#c9b19a"/><rect x="751" y="848" width="4" height="4" fill="#9ab6dc"/><rect x="755" y="844" width="4" height="4" fill="#c9b19a"/><rect x="755" y="848" width="4" height="4" fill="#e0c4a8"/><rect x="759" y="848" width="4" height="4" fill="#c9b19a"/><rect x="763" y="844" width="4" height="4" fill="#8a8b90"/><rect x="767" y="844" width="4" height="4" fill="#7d7f88"/><rect x="767" y="848" width="4" height="4" fill="#7d7f88"/><rect x="775" y="844" width="4" height="4" fill="#f5e3d3"/><rect x="787" y="848" width="4" height="4" fill="#c9b19a"/><rect x="791" y="844" width="4" height="4" fill="#a08878"/><rect x="791" y="848" width="4" height="4" fill="#dceefa"/><rect x="795" y="844" width="4" height="4" fill="#8c7468"/><rect x="795" y="848" width="4" height="4" fill="#d9b79a"/><rect x="799" y="844" width="4" height="4" fill="#9fa9b8"/><rect x="799" y="848" width="4" height="4" fill="#7d7f88"/><rect x="803" y="844" width="4" height="4" fill="#f5e3d3"/><rect x="803" y="848" width="4" height="4" fill="#7b86b8"/><rect x="807" y="844" width="4" height="4" fill="#d9b79a"/><rect x="807" y="848" width="4" height="4" fill="#c9b19a"/><rect x="811" y="844" width="4" height="4" fill="#6f7590"/><rect x="815" y="844" width="4" height="4" fill="#8a8b90"/><rect x="815" y="848" width="4" height="4" fill="#f5e3d3"/><rect x="819" y="844" width="4" height="4" fill="#d9b79a"/><rect x="819" y="848" width="4" height="4" fill="#9097a6"/><rect x="823" y="848" width="4" height="4" fill="#7d7f88"/><rect x="835" y="844" width="4" height="4" fill="#e0c4a8"/><rect x="835" y="848" width="4" height="4" fill="#a08878"/><rect x="839" y="844" width="4" height="4" fill="#7b86b8"/><rect x="843" y="844" width="4" height="4" fill="#7b86b8"/><rect x="659" y="840" width="4" height="4" fill="#e8f0f5"/><rect x="683" y="840" width="4" height="4" fill="#a08878"/><rect x="735" y="840" width="4" height="4" fill="#6b6f7e"/><rect x="743" y="852" width="4" height="4" fill="#6b6f7e"/><rect x="787" y="852" width="4" height="4" fill="#f3ede2"/><rect x="795" y="840" width="4" height="4" fill="#fde9c0"/><rect x="839" y="840" width="4" height="4" fill="#9ab6dc"/><rect x="843" y="840" width="4" height="4" fill="#b3d8f5"/><rect x="611" y="864" width="108" height="16" fill="#f4f4f4"/><rect x="619" y="868" width="4" height="4" fill="#6b6f7e"/><rect x="619" y="872" width="4" height="4" fill="#f3ede2"/><rect x="623" y="868" width="4" height="4" fill="#e0c4a8"/><rect x="623" y="872" width="4" height="4" fill="#9097a6"/><rect x="627" y="868" width="4" height="4" fill="#7b86b8"/><rect x="627" y="872" width="4" height="4" fill="#9ab6dc"/><rect x="631" y="872" width="4" height="4" fill="#f3ede2"/><rect x="639" y="872" width="4" height="4" fill="#f5e3d3"/><rect x="643" y="868" width="4" height="4" fill="#e8f0f5"/><rect x="643" y="872" width="4" height="4" fill="#9ab6dc"/><rect x="647" y="868" width="4" height="4" fill="#eef0f3"/><rect x="647" y="872" width="4" height="4" fill="#eef0f3"/><rect x="651" y="868" width="4" height="4" fill="#a08878"/><rect x="655" y="868" width="4" height="4" fill="#b3d8f5"/><rect x="655" y="872" width="4" height="4" fill="#eef0f3"/><rect x="663" y="872" width="4" height="4" fill="#c9b19a"/><rect x="667" y="868" width="4" height="4" fill="#e0c4a8"/><rect x="667" y="872" width="4" height="4" fill="#7d7f88"/><rect x="671" y="868" width="4" height="4" fill="#9ab6dc"/><rect x="679" y="868" width="4" height="4" fill="#f3ede2"/><rect x="679" y="872" width="4" height="4" fill="#e0c4a8"/><rect x="683" y="868" width="4" height="4" fill="#a08878"/><rect x="687" y="872" width="4" height="4" fill="#b3d8f5"/><rect x="691" y="872" width="4" height="4" fill="#7b86b8"/><rect x="695" y="868" width="4" height="4" fill="#eef0f3"/><rect x="699" y="872" width="4" height="4" fill="#fde9c0"/><rect x="703" y="868" width="4" height="4" fill="#eef0f3"/><rect x="703" y="872" width="4" height="4" fill="#6b6f7e"/><rect x="707" y="868" width="4" height="4" fill="#a08878"/><rect x="699" y="864" width="4" height="4" fill="#a8b4c4"/><rect x="727" y="868" width="4" height="4" fill="#9097a6"/><rect x="727" y="872" width="4" height="4" fill="#f5e3d3"/><rect x="731" y="868" width="4" height="4" fill="#fde9c0"/><rect x="731" y="872" width="4" height="4" fill="#b3d8f5"/><rect x="735" y="868" width="4" height="4" fill="#9fa9b8"/><rect x="739" y="868" width="4" height="4" fill="#6f7590"/><rect x="739" y="872" width="4" height="4" fill="#fde9c0"/><rect x="743" y="868" width="4" height="4" fill="#6f7590"/><rect x="743" y="872" width="4" height="4" fill="#9097a6"/><rect x="747" y="872" width="4" height="4" fill="#7d7f88"/><rect x="751" y="868" width="4" height="4" fill="#9ab6dc"/><rect x="751" y="872" width="4" height="4" fill="#7d7f88"/><rect x="755" y="868" width="4" height="4" fill="#a08878"/><rect x="763" y="868" width="4" height="4" fill="#6f7590"/><rect x="767" y="868" width="4" height="4" fill="#b9c2cc"/><rect x="767" y="872" width="4" height="4" fill="#a8b4c4"/><rect x="771" y="868" width="4" height="4" fill="#6f7590"/><rect x="775" y="868" width="4" height="4" fill="#7b86b8"/><rect x="775" y="872" width="4" height="4" fill="#7d7f88"/><rect x="779" y="868" width="4" height="4" fill="#8c7468"/><rect x="783" y="868" width="4" height="4" fill="#f5e3d3"/><rect x="783" y="872" width="4" height="4" fill="#9fa9b8"/><rect x="787" y="868" width="4" height="4" fill="#9097a6"/><rect x="795" y="868" width="4" height="4" fill="#f3ede2"/><rect x="795" y="872" width="4" height="4" fill="#9fa9b8"/><rect x="799" y="868" width="4" height="4" fill="#f3ede2"/><rect x="803" y="868" width="4" height="4" fill="#8a8b90"/><rect x="803" y="872" width="4" height="4" fill="#e0c4a8"/><rect x="811" y="872" width="4" height="4" fill="#a8b4c4"/><rect x="815" y="868" width="4" height="4" fill="#b9c2cc"/><rect x="815" y="872" width="4" height="4" fill="#b3d8f5"/><rect x="819" y="868" width="4" height="4" fill="#8a8b90"/><rect x="819" y="872" width="4" height="4" fill="#8a8b90"/><rect x="823" y="872" width="4" height="4" fill="#8c7468"/><rect x="827" y="872" width="4" height="4" fill="#c9b19a"/><rect x="835" y="868" width="4" height="4" fill="#a08878"/><rect x="835" y="872" width="4" height="4" fill="#8c7468"/><rect x="839" y="868" width="4" height="4" fill="#b3d8f5"/><rect x="839" y="872" width="4" height="4" fill="#b3d8f5"/><rect x="843" y="868" width="4" height="4" fill="#d9b79a"/><rect x="843" y="872" width="4" height="4" fill="#c9b19a"/><rect x="851" y="868" width="4" height="4" fill="#a8b4c4"/><rect x="851" y="872" width="4" height="4" fill="#7b86b8"/><rect x="855" y="868" width="4" height="4" fill="#eef0f3"/><rect x="855" y="872" width="4" height="4" fill="#7d7f88"/><rect x="799" y="876" width="4" height="4" fill="#9097a6"/><rect x="811" y="876" width="4" height="4" fill="#7d7f88"/><rect x="611" y="904" width="4" height="4" fill="#6f7590"/><rect x="611" y="908" width="4" height="4" fill="#7d7f88"/><rect x="615" y="904" width="4" height="4" fill="#6b6f7e"/><rect x="615" y="908" width="4" height="4" fill="#8a8b90"/><rect x="619" y="904" width="4" height="4" fill="#eef0f3"/><rect x="619" y="908" width="4" height="4" fill="#b3d8f5"/><rect x="627" y="904" width="4" height="4" fill="#7d7f88"/><rect x="627" y="908" width="4" height="4" fill="#d9b79a"/><rect x="631" y="908" width="4" height="4" fill="#c9b19a"/><rect x="635" y="904" width="4" height="4" fill="#8c7468"/><rect x="635" y="908" width="4" height="4" fill="#6b6f7e"/><rect x="643" y="904" width="4" height="4" fill="#e0c4a8"/><rect x="643" y="908" width="4" height="4" fill="#e8f0f5"/><rect x="647" y="904" width="4" height="4" fill="#9fa9b8"/><rect x="647" y="908" width="4" height="4" fill="#6f7590"/><rect x="651" y="904" width="4" height="4" fill="#9097a6"/><rect x="651" y="908" width="4" height="4" fill="#8a8b90"/><rect x="655" y="904" width="4" height="4" fill="#dceefa"/><rect x="659" y="904" width="4" height="4" fill="#9fa9b8"/><rect x="659" y="908" width="4" height="4" fill="#6f7590"/><rect x="663" y="904" width="4" height="4" fill="#e8f0f5"/><rect x="663" y="908" width="4" height="4" fill="#7d7f88"/><rect x="667" y="904" width="4" height="4" fill="#8a8b90"/><rect x="667" y="908" width="4" height="4" fill="#d9b79a"/><rect x="671" y="904" width="4" height="4" fill="#c9b19a"/><rect x="671" y="908" width="4" height="4" fill="#7b86b8"/><rect x="679" y="904" width="4" height="4" fill="#b9c2cc"/><rect x="679" y="908" width="4" height="4" fill="#a08878"/><rect x="683" y="904" width="4" height="4" fill="#7b86b8"/><rect x="683" y="908" width="4" height="4" fill="#b9c2cc"/><rect x="687" y="904" width="4" height="4" fill="#8a8b90"/><rect x="687" y="908" width="4" height="4" fill="#a8b4c4"/><rect x="691" y="908" width="4" height="4" fill="#8c7468"/><rect x="695" y="904" width="4" height="4" fill="#b3d8f5"/><rect x="695" y="908" width="4" height="4" fill="#9097a6"/><rect x="699" y="904" width="4" height="4" fill="#e0c4a8"/><rect x="699" y="908" width="4" height="4" fill="#8a8b90"/><rect x="703" y="904" width="4" height="4" fill="#7b86b8"/><rect x="715" y="904" width="4" height="4" fill="#a08878"/><rect x="715" y="908" width="4" height="4" fill="#8a8b90"/><rect x="719" y="904" width="4" height="4" fill="#9fa9b8"/><rect x="719" y="908" width="4" height="4" fill="#9fa9b8"/><rect x="723" y="904" width="4" height="4" fill="#a08878"/><rect x="723" y="908" width="4" height="4" fill="#8a8b90"/><rect x="727" y="904" width="4" height="4" fill="#c9b19a"/><rect x="727" y="908" width="4" height="4" fill="#9ab6dc"/><rect x="739" y="904" width="4" height="4" fill="#9ab6dc"/><rect x="739" y="908" width="4" height="4" fill="#e8f0f5"/><rect x="743" y="904" width="4" height="4" fill="#6b6f7e"/><rect x="743" y="908" width="4" height="4" fill="#7b86b8"/><rect x="747" y="904" width="4" height="4" fill="#a8b4c4"/><rect x="747" y="908" width="4" height="4" fill="#6b6f7e"/><rect x="751" y="904" width="4" height="4" fill="#a8b4c4"/><rect x="751" y="908" width="4" height="4" fill="#a08878"/><rect x="755" y="904" width="4" height="4" fill="#9ab6dc"/><rect x="755" y="908" width="4" height="4" fill="#9097a6"/><rect x="763" y="904" width="4" height="4" fill="#a8b4c4"/><rect x="763" y="908" width="4" height="4" fill="#e8f0f5"/><rect x="767" y="904" width="4" height="4" fill="#e8f0f5"/><rect x="767" y="908" width="4" height="4" fill="#9ab6dc"/><rect x="771" y="904" width="4" height="4" fill="#6b6f7e"/><rect x="771" y="908" width="4" height="4" fill="#8c7468"/><rect x="775" y="908" width="4" height="4" fill="#a08878"/><rect x="779" y="908" width="4" height="4" fill="#d9b79a"/><rect x="787" y="904" width="4" height="4" fill="#6b6f7e"/><rect x="787" y="908" width="4" height="4" fill="#6b6f7e"/><rect x="791" y="904" width="4" height="4" fill="#d9b79a"/><rect x="791" y="908" width="4" height="4" fill="#c9b19a"/><rect x="795" y="904" width="4" height="4" fill="#e0c4a8"/><rect x="795" y="908" width="4" height="4" fill="#c9b19a"/><rect x="799" y="904" width="4" height="4" fill="#8c7468"/><rect x="799" y="908" width="4" height="4" fill="#a08878"/><rect x="803" y="904" width="4" height="4" fill="#eef0f3"/><rect x="803" y="908" width="4" height="4" fill="#e0c4a8"/><rect x="807" y="904" width="4" height="4" fill="#a8b4c4"/><rect x="807" y="908" width="4" height="4" fill="#9ab6dc"/><rect x="811" y="904" width="4" height="4" fill="#dceefa"/><rect x="811" y="908" width="4" height="4" fill="#7b86b8"/><rect x="815" y="904" width="4" height="4" fill="#fde9c0"/><rect x="815" y="908" width="4" height="4" fill="#dceefa"/><rect x="819" y="904" width="4" height="4" fill="#6b6f7e"/><rect x="819" y="908" width="4" height="4" fill="#f3ede2"/><rect x="823" y="904" width="4" height="4" fill="#dceefa"/><rect x="823" y="908" width="4" height="4" fill="#a8b4c4"/><rect x="827" y="904" width="4" height="4" fill="#9ab6dc"/><rect x="827" y="908" width="4" height="4" fill="#7d7f88"/><rect x="835" y="904" width="4" height="4" fill="#e0c4a8"/><rect x="839" y="904" width="4" height="4" fill="#a8b4c4"/><rect x="839" y="908" width="4" height="4" fill="#f3ede2"/><rect x="843" y="904" width="4" height="4" fill="#a08878"/><rect x="843" y="908" width="4" height="4" fill="#6f7590"/><rect x="847" y="904" width="4" height="4" fill="#b3d8f5"/><rect x="847" y="908" width="4" height="4" fill="#a08878"/><rect x="851" y="904" width="4" height="4" fill="#6f7590"/><rect x="855" y="904" width="4" height="4" fill="#dceefa"/><rect x="855" y="908" width="4" height="4" fill="#6f7590"/><rect x="651" y="900" width="4" height="4" fill="#9097a6"/><rect x="663" y="912" width="4" height="4" fill="#d9b79a"/><rect x="715" y="900" width="4" height="4" fill="#7b86b8"/><rect x="747" y="900" width="4" height="4" fill="#e0c4a8"/><rect x="787" y="900" width="4" height="4" fill="#e8f0f5"/><rect x="791" y="900" width="4" height="4" fill="#9097a6"/></svg>
<!-- EXTRA -->
<div class="a" style="left:1902px;top:64px;width:1px;height:606px;background:#8d8b92"></div>
<svg class="a" style="left:0;top:0" width="1903" height="60" viewBox="0 0 1903 60"><rect x="1707" y="3" width="15" height="3" fill="#f8e8df"/><rect x="1702" y="6" width="28" height="4" fill="#f3d3ca"/><rect x="1698" y="10" width="36" height="4" fill="#f7e0da"/><rect x="1698" y="14" width="36" height="4" fill="#fdfbfa"/><rect x="1702" y="18" width="32" height="4" fill="#f8ece9"/><rect x="1702" y="22" width="28" height="4" fill="#efd2c0"/><rect x="1698" y="26" width="36" height="4" fill="#fcfaf9"/><rect x="1698" y="30" width="36" height="4" fill="#e05536"/><rect x="1698" y="34" width="36" height="4" fill="#ddab83"/><rect x="1702" y="38" width="28" height="4" fill="#f3d2c4"/><rect x="1710" y="42" width="12" height="4" fill="#e9e3e3"/><rect x="1710" y="18" width="20" height="4" fill="#f3d6cf"/><rect x="1702" y="22" width="4" height="4" fill="#8b7a74"/><rect x="1710" y="22" width="8" height="4" fill="#e3b994"/><rect x="1726" y="22" width="4" height="4" fill="#e6c39a"/><rect x="1706" y="6" width="20" height="4" fill="#f1c8b5"/><rect x="1742" y="10" width="4" height="4" fill="#f5eedb"/><rect x="1742" y="14" width="4" height="4" fill="#b0a0a0"/><rect x="1742" y="18" width="4" height="4" fill="#c6ccd8"/><rect x="1746" y="10" width="4" height="4" fill="#2e3350"/><rect x="1746" y="18" width="4" height="4" fill="#c6ccd8"/><rect x="1750" y="10" width="4" height="4" fill="#a8c4e0"/><rect x="1750" y="14" width="4" height="4" fill="#3f4233"/><rect x="1750" y="18" width="4" height="4" fill="#a0a4ac"/><rect x="1754" y="14" width="4" height="4" fill="#8797b8"/><rect x="1758" y="10" width="4" height="4" fill="#2e3350"/><rect x="1758" y="14" width="4" height="4" fill="#9ea2a8"/><rect x="1758" y="18" width="4" height="4" fill="#c6ccd8"/><rect x="1762" y="10" width="4" height="4" fill="#2e3350"/><rect x="1762" y="14" width="4" height="4" fill="#f5eedb"/><rect x="1762" y="18" width="4" height="4" fill="#a0a4ac"/><rect x="1766" y="14" width="4" height="4" fill="#4a5a8e"/><rect x="1766" y="18" width="4" height="4" fill="#ece8f0"/><rect x="1770" y="10" width="4" height="4" fill="#4a3a36"/><rect x="1770" y="14" width="4" height="4" fill="#9ea2a8"/><rect x="1770" y="18" width="4" height="4" fill="#f2ece0"/><rect x="1774" y="10" width="4" height="4" fill="#9e8f8a"/><rect x="1774" y="14" width="4" height="4" fill="#f5eedb"/><rect x="1774" y="18" width="4" height="4" fill="#ece8f0"/><rect x="1778" y="10" width="4" height="4" fill="#b58b62"/><rect x="1778" y="14" width="4" height="4" fill="#4a5a8e"/><rect x="1778" y="18" width="4" height="4" fill="#e8e0d0"/><rect x="1782" y="10" width="4" height="4" fill="#2e3350"/><rect x="1782" y="14" width="4" height="4" fill="#b0a0a0"/><rect x="1782" y="18" width="4" height="4" fill="#d5dbe6"/><rect x="1786" y="10" width="4" height="4" fill="#b58b62"/><rect x="1790" y="10" width="4" height="4" fill="#9e8f8a"/><rect x="1790" y="14" width="4" height="4" fill="#b0a0a0"/><rect x="1790" y="18" width="4" height="4" fill="#b9bcc2"/><rect x="1794" y="10" width="4" height="4" fill="#9e8f8a"/><rect x="1794" y="18" width="4" height="4" fill="#ece8f0"/><rect x="1798" y="10" width="4" height="4" fill="#4a3a36"/><rect x="1798" y="14" width="4" height="4" fill="#4a5a8e"/><rect x="1798" y="18" width="4" height="4" fill="#ece8f0"/><rect x="1802" y="10" width="4" height="4" fill="#7b7f8f"/><rect x="1802" y="14" width="4" height="4" fill="#7b7f8f"/><rect x="1802" y="18" width="4" height="4" fill="#c6ccd8"/><rect x="1810" y="10" width="4" height="4" fill="#3d4a80"/><rect x="1810" y="14" width="4" height="4" fill="#7b7f8f"/><rect x="1810" y="18" width="4" height="4" fill="#b9bcc2"/><rect x="1814" y="10" width="4" height="4" fill="#f5eedb"/><rect x="1814" y="14" width="4" height="4" fill="#c9d4e6"/><rect x="1818" y="10" width="4" height="4" fill="#3d4a80"/><rect x="1818" y="14" width="4" height="4" fill="#7b7f8f"/><rect x="1822" y="10" width="4" height="4" fill="#b58b62"/><rect x="1826" y="10" width="4" height="4" fill="#a8c4e0"/><rect x="1826" y="14" width="4" height="4" fill="#4a5a8e"/><rect x="1826" y="18" width="4" height="4" fill="#c6ccd8"/><rect x="1830" y="10" width="4" height="4" fill="#3f4233"/><rect x="1830" y="14" width="4" height="4" fill="#3f4233"/><rect x="1830" y="18" width="4" height="4" fill="#a0a4ac"/><rect x="1834" y="10" width="4" height="4" fill="#5a5a66"/><rect x="1834" y="18" width="4" height="4" fill="#e8e0d0"/><rect x="1838" y="10" width="4" height="4" fill="#f5eedb"/><rect x="1838" y="14" width="4" height="4" fill="#4a5a8e"/><rect x="1842" y="10" width="4" height="4" fill="#d8c0a8"/><rect x="1842" y="14" width="4" height="4" fill="#8797b8"/><rect x="1842" y="18" width="4" height="4" fill="#a0a4ac"/><rect x="1846" y="10" width="4" height="4" fill="#b58b62"/><rect x="1846" y="14" width="4" height="4" fill="#d8b898"/><rect x="1846" y="18" width="4" height="4" fill="#e8e0d0"/><rect x="1850" y="10" width="4" height="4" fill="#2e3350"/><rect x="1850" y="14" width="4" height="4" fill="#7b7f8f"/><rect x="1854" y="10" width="4" height="4" fill="#a8c4e0"/><rect x="1854" y="14" width="4" height="4" fill="#b0a0a0"/><rect x="1854" y="18" width="4" height="4" fill="#e8e0d0"/><rect x="1858" y="10" width="4" height="4" fill="#b58b62"/><rect x="1858" y="14" width="4" height="4" fill="#f5eedb"/><rect x="1858" y="18" width="4" height="4" fill="#f2ece0"/><rect x="1862" y="10" width="4" height="4" fill="#2e3350"/><rect x="1862" y="18" width="4" height="4" fill="#d5dbe6"/><rect x="1866" y="10" width="4" height="4" fill="#5a5a66"/><rect x="1866" y="14" width="4" height="4" fill="#f5eedb"/><rect x="1866" y="18" width="4" height="4" fill="#d5dbe6"/><rect x="1870" y="10" width="4" height="4" fill="#9e8f8a"/><rect x="1870" y="14" width="4" height="4" fill="#9ea2a8"/><rect x="1870" y="18" width="4" height="4" fill="#e8e0d0"/><rect x="1874" y="10" width="4" height="4" fill="#5a5a66"/><rect x="1874" y="14" width="4" height="4" fill="#8797b8"/><rect x="1874" y="18" width="4" height="4" fill="#a0a4ac"/><rect x="1746" y="30" width="4" height="4" fill="#8ec8f1"/><rect x="1746" y="34" width="4" height="4" fill="#b5dbf7"/><rect x="1754" y="30" width="4" height="4" fill="#c4e2f8"/><rect x="1758" y="30" width="4" height="4" fill="#b5dbf7"/><rect x="1758" y="34" width="4" height="4" fill="#9dcdf3"/><rect x="1762" y="30" width="4" height="4" fill="#6fb2ea"/><rect x="1766" y="30" width="4" height="4" fill="#8ec8f1"/><rect x="1770" y="30" width="4" height="4" fill="#c4e2f8"/><rect x="1774" y="30" width="4" height="4" fill="#e6f3fb"/><rect x="1774" y="34" width="4" height="4" fill="#e6f3fb"/><rect x="1782" y="30" width="4" height="4" fill="#b5dbf7"/><rect x="1790" y="34" width="4" height="4" fill="#b5dbf7"/><rect x="1790" y="38" width="4" height="4" fill="#c4e2f8"/><rect x="1798" y="38" width="4" height="4" fill="#e6f3fb"/><rect x="1802" y="30" width="4" height="4" fill="#9dcdf3"/><rect x="1802" y="34" width="4" height="4" fill="#e6f3fb"/><rect x="1802" y="38" width="4" height="4" fill="#9dcdf3"/><rect x="1806" y="30" width="4" height="4" fill="#9dcdf3"/><rect x="1806" y="34" width="4" height="4" fill="#b5dbf7"/><rect x="1810" y="34" width="4" height="4" fill="#c4e2f8"/><rect x="1810" y="38" width="4" height="4" fill="#b5dbf7"/><rect x="1814" y="30" width="4" height="4" fill="#9dcdf3"/><rect x="1818" y="30" width="4" height="4" fill="#6fb2ea"/><rect x="1822" y="34" width="4" height="4" fill="#e6f3fb"/><rect x="1826" y="30" width="4" height="4" fill="#c4e2f8"/><rect x="1826" y="34" width="4" height="4" fill="#6fb2ea"/><rect x="1830" y="30" width="4" height="4" fill="#8ec8f1"/><rect x="1830" y="34" width="4" height="4" fill="#c4e2f8"/><rect x="1834" y="38" width="4" height="4" fill="#8ec8f1"/><rect x="1838" y="30" width="4" height="4" fill="#8ec8f1"/><rect x="1846" y="30" width="4" height="4" fill="#6fb2ea"/><rect x="1846" y="34" width="4" height="4" fill="#8ec8f1"/><rect x="1854" y="30" width="4" height="4" fill="#6fb2ea"/><rect x="1854" y="34" width="4" height="4" fill="#b5dbf7"/><rect x="1858" y="34" width="4" height="4" fill="#8ec8f1"/><rect x="1862" y="30" width="4" height="4" fill="#d5ebfa"/><rect x="1866" y="30" width="4" height="4" fill="#c4e2f8"/><rect x="1866" y="34" width="4" height="4" fill="#d5ebfa"/><rect x="1866" y="38" width="4" height="4" fill="#e6f3fb"/><rect x="1870" y="30" width="4" height="4" fill="#e6f3fb"/><rect x="1870" y="34" width="4" height="4" fill="#e6f3fb"/><rect x="1874" y="30" width="4" height="4" fill="#b5dbf7"/><rect x="1878" y="30" width="4" height="4" fill="#d5ebfa"/><rect x="1878" y="34" width="4" height="4" fill="#b5dbf7"/></svg>
<svg class="a" style="left:443px;top:248px" width="16" height="22" viewBox="0 0 16 22"><path d="M1.3 1.3 V17.5 L5 14 L7.6 19.6 L10 18.6 L7.6 13.3 L12.6 13.3 Z" fill="#fff" stroke="#1a1a2a" stroke-width="1.2" stroke-linejoin="round"/></svg>
<div class="a" style="left:1816px;top:831px;width:60px;height:60px;border-radius:50%;background:#2687e9;box-shadow:0 2px 8px rgba(0,0,0,0.18)"></div>
<svg class="a" style="left:1828px;top:842px" width="36" height="40" viewBox="0 0 36 40"><path d="M17.5 0.5 C28 0.5 34.6 5.5 34.6 15.5 C34.6 22.5 31.5 27 26.5 31 L19 38.8 L18.8 33 C7.5 33 0.3 27 0.3 16.5 C0.3 6 7.5 0.5 17.5 0.5 Z" fill="#fff"/></svg>
<!-- /EXTRA -->
</body></html>
